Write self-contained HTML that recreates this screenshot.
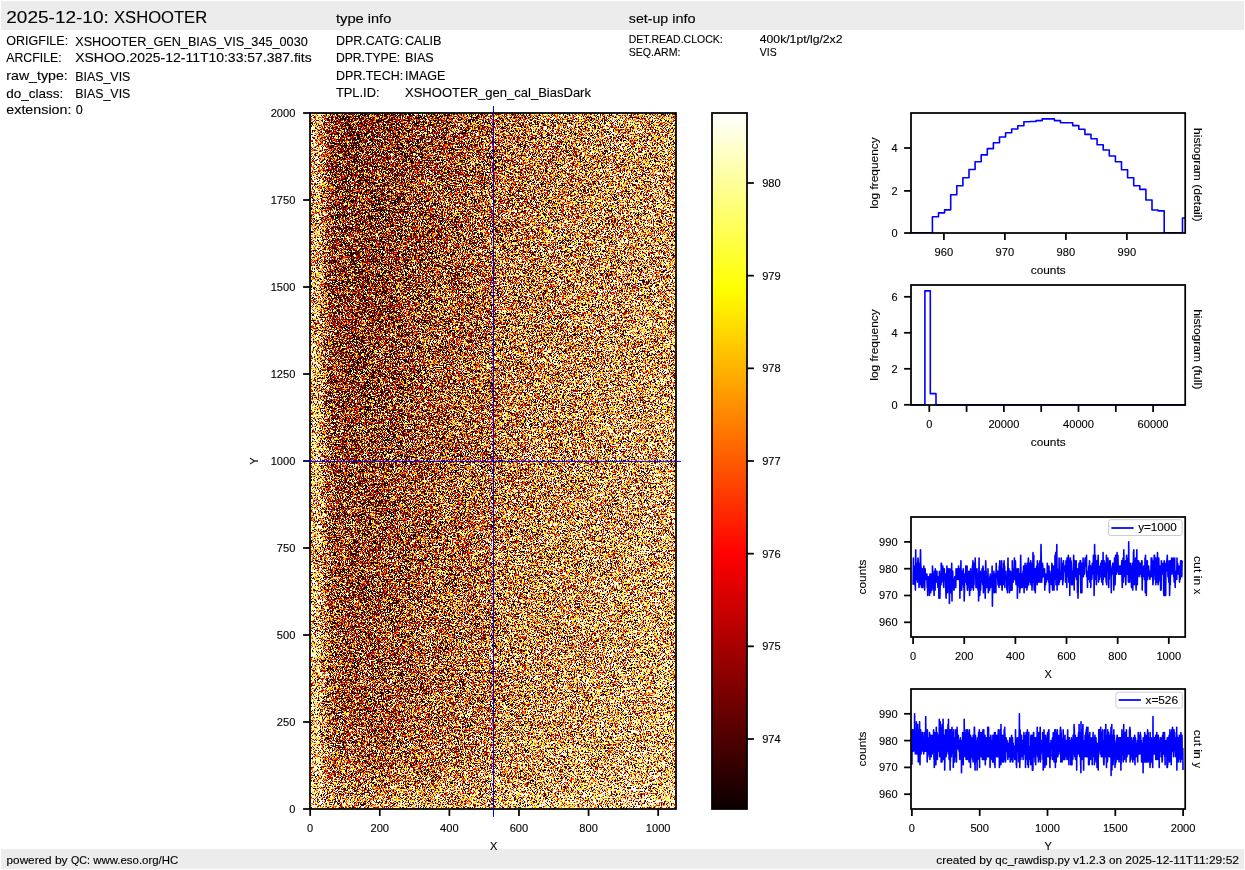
<!DOCTYPE html>
<html><head><meta charset="utf-8"><title>qc_rawdisp</title>
<style>html,body{margin:0;padding:0;background:#fff;overflow:hidden}svg{display:block;will-change:transform}text{font-family:"Liberation Sans",sans-serif;stroke:#000;stroke-width:0.12px}</style>
</head><body>
<svg width="1245" height="870" viewBox="0 0 1245 870">
<defs>
<filter id="noise" x="0" y="0" width="100%" height="100%" filterUnits="objectBoundingBox" color-interpolation-filters="sRGB">
<feTurbulence type="fractalNoise" baseFrequency="1.7" numOctaves="2" seed="7" result="t"/>
<feColorMatrix in="t" type="matrix" values="0 0 0 1 0  0 0 0 1 0  0 0 0 1 0  0 0 0 0 1" result="n"/>
<feComposite in="n" in2="SourceGraphic" operator="arithmetic" k1="0" k2="2.216" k3="0.5" k4="-0.822" result="v"/>
<feComponentTransfer in="v">
<feFuncR type="discrete" tableValues="0.0431 0.0431 0.0431 0.0431 0.2980 0.6471 1.0000 1.0000 1.0000 1.0000 1.0000 1.0000 1.0000 1.0000"/>
<feFuncG type="discrete" tableValues="0.0000 0.0000 0.0000 0.0000 0.0000 0.0000 0.0000 0.3608 0.7098 1.0000 1.0000 1.0000 1.0000 1.0000"/>
<feFuncB type="discrete" tableValues="0.0000 0.0000 0.0000 0.0000 0.0000 0.0000 0.0000 0.0000 0.0000 0.0902 0.6157 1.0000 1.0000 1.0000"/>
<feFuncA type="discrete" tableValues="1 1"/>
</feComponentTransfer>
</filter>
<linearGradient id="m0" x1="0" y1="0" x2="1" y2="0">
<stop offset="0.0000" stop-color="rgb(151,151,151)"/>
<stop offset="0.0055" stop-color="rgb(187,187,187)"/>
<stop offset="0.0246" stop-color="rgb(180,180,180)"/>
<stop offset="0.0355" stop-color="rgb(136,136,136)"/>
<stop offset="0.0519" stop-color="rgb(78,78,78)"/>
<stop offset="0.0683" stop-color="rgb(53,53,53)"/>
<stop offset="0.1093" stop-color="rgb(48,48,48)"/>
<stop offset="0.1230" stop-color="rgb(46,46,46)"/>
<stop offset="0.1776" stop-color="rgb(49,49,49)"/>
<stop offset="0.2186" stop-color="rgb(57,57,57)"/>
<stop offset="0.2596" stop-color="rgb(67,67,67)"/>
<stop offset="0.3005" stop-color="rgb(78,78,78)"/>
<stop offset="0.3552" stop-color="rgb(89,89,89)"/>
<stop offset="0.3825" stop-color="rgb(93,93,93)"/>
<stop offset="0.4235" stop-color="rgb(100,100,100)"/>
<stop offset="0.4973" stop-color="rgb(111,111,111)"/>
<stop offset="0.5082" stop-color="rgb(125,125,125)"/>
<stop offset="0.6011" stop-color="rgb(135,135,135)"/>
<stop offset="0.6831" stop-color="rgb(143,143,143)"/>
<stop offset="0.7650" stop-color="rgb(151,151,151)"/>
<stop offset="0.8470" stop-color="rgb(158,158,158)"/>
<stop offset="0.9290" stop-color="rgb(164,164,164)"/>
<stop offset="1.0000" stop-color="rgb(169,169,169)"/>
</linearGradient>
<linearGradient id="m1" x1="0" y1="0" x2="1" y2="0">
<stop offset="0.0000" stop-color="rgb(153,153,153)"/>
<stop offset="0.0055" stop-color="rgb(190,190,190)"/>
<stop offset="0.0246" stop-color="rgb(182,182,182)"/>
<stop offset="0.0355" stop-color="rgb(139,139,139)"/>
<stop offset="0.0519" stop-color="rgb(82,82,82)"/>
<stop offset="0.0683" stop-color="rgb(57,57,57)"/>
<stop offset="0.1093" stop-color="rgb(52,52,52)"/>
<stop offset="0.1230" stop-color="rgb(50,50,50)"/>
<stop offset="0.1776" stop-color="rgb(54,54,54)"/>
<stop offset="0.2186" stop-color="rgb(61,61,61)"/>
<stop offset="0.2596" stop-color="rgb(71,71,71)"/>
<stop offset="0.3005" stop-color="rgb(82,82,82)"/>
<stop offset="0.3552" stop-color="rgb(92,92,92)"/>
<stop offset="0.3825" stop-color="rgb(96,96,96)"/>
<stop offset="0.4235" stop-color="rgb(103,103,103)"/>
<stop offset="0.4973" stop-color="rgb(113,113,113)"/>
<stop offset="0.5082" stop-color="rgb(128,128,128)"/>
<stop offset="0.6011" stop-color="rgb(137,137,137)"/>
<stop offset="0.6831" stop-color="rgb(146,146,146)"/>
<stop offset="0.7650" stop-color="rgb(153,153,153)"/>
<stop offset="0.8470" stop-color="rgb(160,160,160)"/>
<stop offset="0.9290" stop-color="rgb(166,166,166)"/>
<stop offset="1.0000" stop-color="rgb(171,171,171)"/>
</linearGradient>
<linearGradient id="m2" x1="0" y1="0" x2="1" y2="0">
<stop offset="0.0000" stop-color="rgb(156,156,156)"/>
<stop offset="0.0055" stop-color="rgb(192,192,192)"/>
<stop offset="0.0246" stop-color="rgb(185,185,185)"/>
<stop offset="0.0355" stop-color="rgb(141,141,141)"/>
<stop offset="0.0519" stop-color="rgb(85,85,85)"/>
<stop offset="0.0683" stop-color="rgb(61,61,61)"/>
<stop offset="0.1093" stop-color="rgb(56,56,56)"/>
<stop offset="0.1230" stop-color="rgb(54,54,54)"/>
<stop offset="0.1776" stop-color="rgb(58,58,58)"/>
<stop offset="0.2186" stop-color="rgb(65,65,65)"/>
<stop offset="0.2596" stop-color="rgb(75,75,75)"/>
<stop offset="0.3005" stop-color="rgb(85,85,85)"/>
<stop offset="0.3552" stop-color="rgb(95,95,95)"/>
<stop offset="0.3825" stop-color="rgb(99,99,99)"/>
<stop offset="0.4235" stop-color="rgb(106,106,106)"/>
<stop offset="0.4973" stop-color="rgb(116,116,116)"/>
<stop offset="0.5082" stop-color="rgb(130,130,130)"/>
<stop offset="0.6011" stop-color="rgb(140,140,140)"/>
<stop offset="0.6831" stop-color="rgb(148,148,148)"/>
<stop offset="0.7650" stop-color="rgb(156,156,156)"/>
<stop offset="0.8470" stop-color="rgb(163,163,163)"/>
<stop offset="0.9290" stop-color="rgb(169,169,169)"/>
<stop offset="1.0000" stop-color="rgb(174,174,174)"/>
</linearGradient>
<linearGradient id="m3" x1="0" y1="0" x2="1" y2="0">
<stop offset="0.0000" stop-color="rgb(158,158,158)"/>
<stop offset="0.0055" stop-color="rgb(195,195,195)"/>
<stop offset="0.0246" stop-color="rgb(187,187,187)"/>
<stop offset="0.0355" stop-color="rgb(144,144,144)"/>
<stop offset="0.0519" stop-color="rgb(89,89,89)"/>
<stop offset="0.0683" stop-color="rgb(65,65,65)"/>
<stop offset="0.1093" stop-color="rgb(60,60,60)"/>
<stop offset="0.1230" stop-color="rgb(59,59,59)"/>
<stop offset="0.1776" stop-color="rgb(62,62,62)"/>
<stop offset="0.2186" stop-color="rgb(69,69,69)"/>
<stop offset="0.2596" stop-color="rgb(79,79,79)"/>
<stop offset="0.3005" stop-color="rgb(89,89,89)"/>
<stop offset="0.3552" stop-color="rgb(98,98,98)"/>
<stop offset="0.3825" stop-color="rgb(102,102,102)"/>
<stop offset="0.4235" stop-color="rgb(108,108,108)"/>
<stop offset="0.4973" stop-color="rgb(118,118,118)"/>
<stop offset="0.5082" stop-color="rgb(133,133,133)"/>
<stop offset="0.6011" stop-color="rgb(142,142,142)"/>
<stop offset="0.6831" stop-color="rgb(151,151,151)"/>
<stop offset="0.7650" stop-color="rgb(158,158,158)"/>
<stop offset="0.8470" stop-color="rgb(165,165,165)"/>
<stop offset="0.9290" stop-color="rgb(171,171,171)"/>
<stop offset="1.0000" stop-color="rgb(176,176,176)"/>
</linearGradient>
<linearGradient id="m4" x1="0" y1="0" x2="1" y2="0">
<stop offset="0.0000" stop-color="rgb(161,161,161)"/>
<stop offset="0.0055" stop-color="rgb(197,197,197)"/>
<stop offset="0.0246" stop-color="rgb(190,190,190)"/>
<stop offset="0.0355" stop-color="rgb(146,146,146)"/>
<stop offset="0.0519" stop-color="rgb(92,92,92)"/>
<stop offset="0.0683" stop-color="rgb(69,69,69)"/>
<stop offset="0.1093" stop-color="rgb(65,65,65)"/>
<stop offset="0.1230" stop-color="rgb(63,63,63)"/>
<stop offset="0.1776" stop-color="rgb(66,66,66)"/>
<stop offset="0.2186" stop-color="rgb(73,73,73)"/>
<stop offset="0.2596" stop-color="rgb(82,82,82)"/>
<stop offset="0.3005" stop-color="rgb(92,92,92)"/>
<stop offset="0.3552" stop-color="rgb(102,102,102)"/>
<stop offset="0.3825" stop-color="rgb(105,105,105)"/>
<stop offset="0.4235" stop-color="rgb(111,111,111)"/>
<stop offset="0.4973" stop-color="rgb(121,121,121)"/>
<stop offset="0.5082" stop-color="rgb(135,135,135)"/>
<stop offset="0.6011" stop-color="rgb(145,145,145)"/>
<stop offset="0.6831" stop-color="rgb(153,153,153)"/>
<stop offset="0.7650" stop-color="rgb(161,161,161)"/>
<stop offset="0.8470" stop-color="rgb(168,168,168)"/>
<stop offset="0.9290" stop-color="rgb(174,174,174)"/>
<stop offset="1.0000" stop-color="rgb(179,179,179)"/>
</linearGradient>
<linearGradient id="m5" x1="0" y1="0" x2="1" y2="0">
<stop offset="0.0000" stop-color="rgb(163,163,163)"/>
<stop offset="0.0055" stop-color="rgb(200,200,200)"/>
<stop offset="0.0246" stop-color="rgb(192,192,192)"/>
<stop offset="0.0355" stop-color="rgb(149,149,149)"/>
<stop offset="0.0519" stop-color="rgb(95,95,95)"/>
<stop offset="0.0683" stop-color="rgb(74,74,74)"/>
<stop offset="0.1093" stop-color="rgb(69,69,69)"/>
<stop offset="0.1230" stop-color="rgb(67,67,67)"/>
<stop offset="0.1776" stop-color="rgb(70,70,70)"/>
<stop offset="0.2186" stop-color="rgb(77,77,77)"/>
<stop offset="0.2596" stop-color="rgb(86,86,86)"/>
<stop offset="0.3005" stop-color="rgb(95,95,95)"/>
<stop offset="0.3552" stop-color="rgb(105,105,105)"/>
<stop offset="0.3825" stop-color="rgb(109,109,109)"/>
<stop offset="0.4235" stop-color="rgb(114,114,114)"/>
<stop offset="0.4973" stop-color="rgb(124,124,124)"/>
<stop offset="0.5082" stop-color="rgb(138,138,138)"/>
<stop offset="0.6011" stop-color="rgb(147,147,147)"/>
<stop offset="0.6831" stop-color="rgb(156,156,156)"/>
<stop offset="0.7650" stop-color="rgb(163,163,163)"/>
<stop offset="0.8470" stop-color="rgb(170,170,170)"/>
<stop offset="0.9290" stop-color="rgb(176,176,176)"/>
<stop offset="1.0000" stop-color="rgb(181,181,181)"/>
</linearGradient>
<linearGradient id="m6" x1="0" y1="0" x2="1" y2="0">
<stop offset="0.0000" stop-color="rgb(166,166,166)"/>
<stop offset="0.0055" stop-color="rgb(202,202,202)"/>
<stop offset="0.0246" stop-color="rgb(195,195,195)"/>
<stop offset="0.0355" stop-color="rgb(151,151,151)"/>
<stop offset="0.0519" stop-color="rgb(99,99,99)"/>
<stop offset="0.0683" stop-color="rgb(78,78,78)"/>
<stop offset="0.1093" stop-color="rgb(73,73,73)"/>
<stop offset="0.1230" stop-color="rgb(72,72,72)"/>
<stop offset="0.1776" stop-color="rgb(75,75,75)"/>
<stop offset="0.2186" stop-color="rgb(81,81,81)"/>
<stop offset="0.2596" stop-color="rgb(90,90,90)"/>
<stop offset="0.3005" stop-color="rgb(99,99,99)"/>
<stop offset="0.3552" stop-color="rgb(108,108,108)"/>
<stop offset="0.3825" stop-color="rgb(112,112,112)"/>
<stop offset="0.4235" stop-color="rgb(117,117,117)"/>
<stop offset="0.4973" stop-color="rgb(126,126,126)"/>
<stop offset="0.5082" stop-color="rgb(140,140,140)"/>
<stop offset="0.6011" stop-color="rgb(150,150,150)"/>
<stop offset="0.6831" stop-color="rgb(158,158,158)"/>
<stop offset="0.7650" stop-color="rgb(166,166,166)"/>
<stop offset="0.8470" stop-color="rgb(173,173,173)"/>
<stop offset="0.9290" stop-color="rgb(179,179,179)"/>
<stop offset="1.0000" stop-color="rgb(184,184,184)"/>
</linearGradient>
<linearGradient id="m7" x1="0" y1="0" x2="1" y2="0">
<stop offset="0.0000" stop-color="rgb(168,168,168)"/>
<stop offset="0.0055" stop-color="rgb(205,205,205)"/>
<stop offset="0.0246" stop-color="rgb(197,197,197)"/>
<stop offset="0.0355" stop-color="rgb(154,154,154)"/>
<stop offset="0.0519" stop-color="rgb(103,103,103)"/>
<stop offset="0.0683" stop-color="rgb(82,82,82)"/>
<stop offset="0.1093" stop-color="rgb(78,78,78)"/>
<stop offset="0.1230" stop-color="rgb(76,76,76)"/>
<stop offset="0.1776" stop-color="rgb(79,79,79)"/>
<stop offset="0.2186" stop-color="rgb(85,85,85)"/>
<stop offset="0.2596" stop-color="rgb(94,94,94)"/>
<stop offset="0.3005" stop-color="rgb(103,103,103)"/>
<stop offset="0.3552" stop-color="rgb(111,111,111)"/>
<stop offset="0.3825" stop-color="rgb(115,115,115)"/>
<stop offset="0.4235" stop-color="rgb(120,120,120)"/>
<stop offset="0.4973" stop-color="rgb(129,129,129)"/>
<stop offset="0.5082" stop-color="rgb(143,143,143)"/>
<stop offset="0.6011" stop-color="rgb(152,152,152)"/>
<stop offset="0.6831" stop-color="rgb(161,161,161)"/>
<stop offset="0.7650" stop-color="rgb(168,168,168)"/>
<stop offset="0.8470" stop-color="rgb(176,176,176)"/>
<stop offset="0.9290" stop-color="rgb(181,181,181)"/>
<stop offset="1.0000" stop-color="rgb(187,187,187)"/>
</linearGradient>
<linearGradient id="m8" x1="0" y1="0" x2="1" y2="0">
<stop offset="0.0000" stop-color="rgb(171,171,171)"/>
<stop offset="0.0055" stop-color="rgb(207,207,207)"/>
<stop offset="0.0246" stop-color="rgb(200,200,200)"/>
<stop offset="0.0355" stop-color="rgb(156,156,156)"/>
<stop offset="0.0519" stop-color="rgb(106,106,106)"/>
<stop offset="0.0683" stop-color="rgb(86,86,86)"/>
<stop offset="0.1093" stop-color="rgb(82,82,82)"/>
<stop offset="0.1230" stop-color="rgb(80,80,80)"/>
<stop offset="0.1776" stop-color="rgb(83,83,83)"/>
<stop offset="0.2186" stop-color="rgb(89,89,89)"/>
<stop offset="0.2596" stop-color="rgb(98,98,98)"/>
<stop offset="0.3005" stop-color="rgb(106,106,106)"/>
<stop offset="0.3552" stop-color="rgb(115,115,115)"/>
<stop offset="0.3825" stop-color="rgb(118,118,118)"/>
<stop offset="0.4235" stop-color="rgb(123,123,123)"/>
<stop offset="0.4973" stop-color="rgb(132,132,132)"/>
<stop offset="0.5082" stop-color="rgb(145,145,145)"/>
<stop offset="0.6011" stop-color="rgb(155,155,155)"/>
<stop offset="0.6831" stop-color="rgb(164,164,164)"/>
<stop offset="0.7650" stop-color="rgb(171,171,171)"/>
<stop offset="0.8470" stop-color="rgb(178,178,178)"/>
<stop offset="0.9290" stop-color="rgb(184,184,184)"/>
<stop offset="1.0000" stop-color="rgb(189,189,189)"/>
</linearGradient>
<linearGradient id="m9" x1="0" y1="0" x2="1" y2="0">
<stop offset="0.0000" stop-color="rgb(173,173,173)"/>
<stop offset="0.0055" stop-color="rgb(210,210,210)"/>
<stop offset="0.0246" stop-color="rgb(202,202,202)"/>
<stop offset="0.0355" stop-color="rgb(159,159,159)"/>
<stop offset="0.0519" stop-color="rgb(109,109,109)"/>
<stop offset="0.0683" stop-color="rgb(90,90,90)"/>
<stop offset="0.1093" stop-color="rgb(86,86,86)"/>
<stop offset="0.1230" stop-color="rgb(85,85,85)"/>
<stop offset="0.1776" stop-color="rgb(87,87,87)"/>
<stop offset="0.2186" stop-color="rgb(93,93,93)"/>
<stop offset="0.2596" stop-color="rgb(101,101,101)"/>
<stop offset="0.3005" stop-color="rgb(109,109,109)"/>
<stop offset="0.3552" stop-color="rgb(118,118,118)"/>
<stop offset="0.3825" stop-color="rgb(121,121,121)"/>
<stop offset="0.4235" stop-color="rgb(126,126,126)"/>
<stop offset="0.4973" stop-color="rgb(134,134,134)"/>
<stop offset="0.5082" stop-color="rgb(148,148,148)"/>
<stop offset="0.6011" stop-color="rgb(158,158,158)"/>
<stop offset="0.6831" stop-color="rgb(166,166,166)"/>
<stop offset="0.7650" stop-color="rgb(173,173,173)"/>
<stop offset="0.8470" stop-color="rgb(181,181,181)"/>
<stop offset="0.9290" stop-color="rgb(186,186,186)"/>
<stop offset="1.0000" stop-color="rgb(192,192,192)"/>
</linearGradient>
<linearGradient id="m10" x1="0" y1="0" x2="1" y2="0">
<stop offset="0.0000" stop-color="rgb(177,177,177)"/>
<stop offset="0.0055" stop-color="rgb(214,214,214)"/>
<stop offset="0.0246" stop-color="rgb(206,206,206)"/>
<stop offset="0.0355" stop-color="rgb(163,163,163)"/>
<stop offset="0.0519" stop-color="rgb(114,114,114)"/>
<stop offset="0.0683" stop-color="rgb(95,95,95)"/>
<stop offset="0.1093" stop-color="rgb(91,91,91)"/>
<stop offset="0.1230" stop-color="rgb(90,90,90)"/>
<stop offset="0.1776" stop-color="rgb(93,93,93)"/>
<stop offset="0.2186" stop-color="rgb(98,98,98)"/>
<stop offset="0.2596" stop-color="rgb(106,106,106)"/>
<stop offset="0.3005" stop-color="rgb(114,114,114)"/>
<stop offset="0.3552" stop-color="rgb(122,122,122)"/>
<stop offset="0.3825" stop-color="rgb(125,125,125)"/>
<stop offset="0.4235" stop-color="rgb(130,130,130)"/>
<stop offset="0.4973" stop-color="rgb(138,138,138)"/>
<stop offset="0.5082" stop-color="rgb(152,152,152)"/>
<stop offset="0.6011" stop-color="rgb(161,161,161)"/>
<stop offset="0.6831" stop-color="rgb(170,170,170)"/>
<stop offset="0.7650" stop-color="rgb(177,177,177)"/>
<stop offset="0.8470" stop-color="rgb(185,185,185)"/>
<stop offset="0.9290" stop-color="rgb(190,190,190)"/>
<stop offset="1.0000" stop-color="rgb(195,195,195)"/>
</linearGradient>
<linearGradient id="m11" x1="0" y1="0" x2="1" y2="0">
<stop offset="0.0000" stop-color="rgb(185,185,185)"/>
<stop offset="0.0055" stop-color="rgb(222,222,222)"/>
<stop offset="0.0246" stop-color="rgb(214,214,214)"/>
<stop offset="0.0355" stop-color="rgb(171,171,171)"/>
<stop offset="0.0519" stop-color="rgb(123,123,123)"/>
<stop offset="0.0683" stop-color="rgb(106,106,106)"/>
<stop offset="0.1093" stop-color="rgb(102,102,102)"/>
<stop offset="0.1230" stop-color="rgb(101,101,101)"/>
<stop offset="0.1776" stop-color="rgb(103,103,103)"/>
<stop offset="0.2186" stop-color="rgb(108,108,108)"/>
<stop offset="0.2596" stop-color="rgb(116,116,116)"/>
<stop offset="0.3005" stop-color="rgb(123,123,123)"/>
<stop offset="0.3552" stop-color="rgb(131,131,131)"/>
<stop offset="0.3825" stop-color="rgb(134,134,134)"/>
<stop offset="0.4235" stop-color="rgb(139,139,139)"/>
<stop offset="0.4973" stop-color="rgb(146,146,146)"/>
<stop offset="0.5082" stop-color="rgb(160,160,160)"/>
<stop offset="0.6011" stop-color="rgb(169,169,169)"/>
<stop offset="0.6831" stop-color="rgb(178,178,178)"/>
<stop offset="0.7650" stop-color="rgb(185,185,185)"/>
<stop offset="0.8470" stop-color="rgb(192,192,192)"/>
<stop offset="0.9290" stop-color="rgb(198,198,198)"/>
<stop offset="1.0000" stop-color="rgb(203,203,203)"/>
</linearGradient>
<linearGradient id="m12" x1="0" y1="0" x2="1" y2="0">
<stop offset="0.0000" stop-color="rgb(191,191,191)"/>
<stop offset="0.0055" stop-color="rgb(228,228,228)"/>
<stop offset="0.0246" stop-color="rgb(220,220,220)"/>
<stop offset="0.0355" stop-color="rgb(177,177,177)"/>
<stop offset="0.0519" stop-color="rgb(138,138,138)"/>
<stop offset="0.0683" stop-color="rgb(127,127,127)"/>
<stop offset="0.1093" stop-color="rgb(124,124,124)"/>
<stop offset="0.1230" stop-color="rgb(123,123,123)"/>
<stop offset="0.1776" stop-color="rgb(125,125,125)"/>
<stop offset="0.2186" stop-color="rgb(128,128,128)"/>
<stop offset="0.2596" stop-color="rgb(133,133,133)"/>
<stop offset="0.3005" stop-color="rgb(138,138,138)"/>
<stop offset="0.3552" stop-color="rgb(143,143,143)"/>
<stop offset="0.3825" stop-color="rgb(145,145,145)"/>
<stop offset="0.4235" stop-color="rgb(148,148,148)"/>
<stop offset="0.4973" stop-color="rgb(153,153,153)"/>
<stop offset="0.5082" stop-color="rgb(166,166,166)"/>
<stop offset="0.6011" stop-color="rgb(175,175,175)"/>
<stop offset="0.6831" stop-color="rgb(184,184,184)"/>
<stop offset="0.7650" stop-color="rgb(191,191,191)"/>
<stop offset="0.8470" stop-color="rgb(199,199,199)"/>
<stop offset="0.9290" stop-color="rgb(204,204,204)"/>
<stop offset="1.0000" stop-color="rgb(209,209,209)"/>
</linearGradient>
<linearGradient id="m13" x1="0" y1="0" x2="1" y2="0">
<stop offset="0.0000" stop-color="rgb(201,201,201)"/>
<stop offset="0.0055" stop-color="rgb(238,238,238)"/>
<stop offset="0.0246" stop-color="rgb(230,230,230)"/>
<stop offset="0.0355" stop-color="rgb(187,187,187)"/>
<stop offset="0.0519" stop-color="rgb(154,154,154)"/>
<stop offset="0.0683" stop-color="rgb(146,146,146)"/>
<stop offset="0.1093" stop-color="rgb(145,145,145)"/>
<stop offset="0.1230" stop-color="rgb(144,144,144)"/>
<stop offset="0.1776" stop-color="rgb(145,145,145)"/>
<stop offset="0.2186" stop-color="rgb(147,147,147)"/>
<stop offset="0.2596" stop-color="rgb(151,151,151)"/>
<stop offset="0.3005" stop-color="rgb(154,154,154)"/>
<stop offset="0.3552" stop-color="rgb(157,157,157)"/>
<stop offset="0.3825" stop-color="rgb(158,158,158)"/>
<stop offset="0.4235" stop-color="rgb(160,160,160)"/>
<stop offset="0.4973" stop-color="rgb(164,164,164)"/>
<stop offset="0.5082" stop-color="rgb(176,176,176)"/>
<stop offset="0.6011" stop-color="rgb(185,185,185)"/>
<stop offset="0.6831" stop-color="rgb(194,194,194)"/>
<stop offset="0.7650" stop-color="rgb(201,201,201)"/>
<stop offset="0.8470" stop-color="rgb(208,208,208)"/>
<stop offset="0.9290" stop-color="rgb(214,214,214)"/>
<stop offset="1.0000" stop-color="rgb(219,219,219)"/>
</linearGradient>
<linearGradient id="m14" x1="0" y1="0" x2="1" y2="0">
<stop offset="0.0000" stop-color="rgb(212,212,212)"/>
<stop offset="0.0055" stop-color="rgb(249,249,249)"/>
<stop offset="0.0246" stop-color="rgb(241,241,241)"/>
<stop offset="0.0355" stop-color="rgb(198,198,198)"/>
<stop offset="0.0519" stop-color="rgb(169,169,169)"/>
<stop offset="0.0683" stop-color="rgb(164,164,164)"/>
<stop offset="0.1093" stop-color="rgb(163,163,163)"/>
<stop offset="0.1230" stop-color="rgb(163,163,163)"/>
<stop offset="0.1776" stop-color="rgb(164,164,164)"/>
<stop offset="0.2186" stop-color="rgb(165,165,165)"/>
<stop offset="0.2596" stop-color="rgb(167,167,167)"/>
<stop offset="0.3005" stop-color="rgb(169,169,169)"/>
<stop offset="0.3552" stop-color="rgb(171,171,171)"/>
<stop offset="0.3825" stop-color="rgb(172,172,172)"/>
<stop offset="0.4235" stop-color="rgb(173,173,173)"/>
<stop offset="0.4973" stop-color="rgb(175,175,175)"/>
<stop offset="0.5082" stop-color="rgb(187,187,187)"/>
<stop offset="0.6011" stop-color="rgb(196,196,196)"/>
<stop offset="0.6831" stop-color="rgb(205,205,205)"/>
<stop offset="0.7650" stop-color="rgb(212,212,212)"/>
<stop offset="0.8470" stop-color="rgb(219,219,219)"/>
<stop offset="0.9290" stop-color="rgb(225,225,225)"/>
<stop offset="1.0000" stop-color="rgb(230,230,230)"/>
</linearGradient>
<linearGradient id="m15" x1="0" y1="0" x2="1" y2="0">
<stop offset="0.0000" stop-color="rgb(222,222,222)"/>
<stop offset="0.0055" stop-color="rgb(255,255,255)"/>
<stop offset="0.0246" stop-color="rgb(251,251,251)"/>
<stop offset="0.0355" stop-color="rgb(207,207,207)"/>
<stop offset="0.0519" stop-color="rgb(182,182,182)"/>
<stop offset="0.0683" stop-color="rgb(179,179,179)"/>
<stop offset="0.1093" stop-color="rgb(178,178,178)"/>
<stop offset="0.1230" stop-color="rgb(178,178,178)"/>
<stop offset="0.1776" stop-color="rgb(179,179,179)"/>
<stop offset="0.2186" stop-color="rgb(179,179,179)"/>
<stop offset="0.2596" stop-color="rgb(180,180,180)"/>
<stop offset="0.3005" stop-color="rgb(182,182,182)"/>
<stop offset="0.3552" stop-color="rgb(183,183,183)"/>
<stop offset="0.3825" stop-color="rgb(183,183,183)"/>
<stop offset="0.4235" stop-color="rgb(184,184,184)"/>
<stop offset="0.4973" stop-color="rgb(185,185,185)"/>
<stop offset="0.5082" stop-color="rgb(196,196,196)"/>
<stop offset="0.6011" stop-color="rgb(206,206,206)"/>
<stop offset="0.6831" stop-color="rgb(214,214,214)"/>
<stop offset="0.7650" stop-color="rgb(222,222,222)"/>
<stop offset="0.8470" stop-color="rgb(229,229,229)"/>
<stop offset="0.9290" stop-color="rgb(235,235,235)"/>
<stop offset="1.0000" stop-color="rgb(240,240,240)"/>
</linearGradient>
<linearGradient id="cb" x1="0" y1="1" x2="0" y2="0">
<stop offset="0.0" stop-color="#0b0000"/>
<stop offset="0.365079" stop-color="#ff0000"/>
<stop offset="0.746032" stop-color="#ffff00"/>
<stop offset="1.0" stop-color="#ffffff"/>
</linearGradient>
</defs>
<rect x="1" y="1" width="1243" height="29" fill="#ececec"/>
<rect x="1" y="849" width="1243" height="20" fill="#ececec"/>
<text x="6.30" y="22.90" font-size="16.76" textLength="102.47" lengthAdjust="spacingAndGlyphs" fill="#000">2025-12-10:</text>
<text x="114.07" y="22.90" font-size="16.76" textLength="93.06" lengthAdjust="spacingAndGlyphs" fill="#000">XSHOOTER</text>
<text x="335.90" y="22.90" font-size="12.57" textLength="27.92" lengthAdjust="spacingAndGlyphs" fill="#000">type</text>
<text x="367.80" y="22.90" font-size="12.57" textLength="23.44" lengthAdjust="spacingAndGlyphs" fill="#000">info</text>
<text x="628.80" y="22.90" font-size="12.57" textLength="39.47" lengthAdjust="spacingAndGlyphs" fill="#000">set-up</text>
<text x="672.25" y="22.90" font-size="12.57" textLength="23.44" lengthAdjust="spacingAndGlyphs" fill="#000">info</text>
<text x="6.30" y="44.90" font-size="12.57" textLength="61.85" lengthAdjust="spacingAndGlyphs" fill="#000">ORIGFILE:</text>
<text x="75.20" y="45.70" font-size="12.57" textLength="232.57" lengthAdjust="spacingAndGlyphs" fill="#000">XSHOOTER_GEN_BIAS_VIS_345_0030</text>
<text x="6.30" y="61.70" font-size="12.57" textLength="55.29" lengthAdjust="spacingAndGlyphs" fill="#000">ARCFILE:</text>
<text x="75.20" y="61.70" font-size="12.57" textLength="236.56" lengthAdjust="spacingAndGlyphs" fill="#000">XSHOO.2025-12-11T10:33:57.387.fits</text>
<text x="6.30" y="80.10" font-size="12.57" textLength="61.41" lengthAdjust="spacingAndGlyphs" fill="#000">raw_type:</text>
<text x="75.20" y="80.60" font-size="12.57" textLength="55.17" lengthAdjust="spacingAndGlyphs" fill="#000">BIAS_VIS</text>
<text x="6.30" y="97.50" font-size="12.57" textLength="57.07" lengthAdjust="spacingAndGlyphs" fill="#000">do_class:</text>
<text x="75.20" y="97.60" font-size="12.57" textLength="55.17" lengthAdjust="spacingAndGlyphs" fill="#000">BIAS_VIS</text>
<text x="6.30" y="114.20" font-size="12.57" textLength="65.15" lengthAdjust="spacingAndGlyphs" fill="#000">extension:</text>
<text x="79.18" y="114.20" font-size="12.57" text-anchor="middle" fill="#000">0</text>
<text x="335.90" y="45.00" font-size="12.57" textLength="67.22" lengthAdjust="spacingAndGlyphs" fill="#000">DPR.CATG:</text>
<text x="405.00" y="45.00" font-size="12.57" textLength="36.51" lengthAdjust="spacingAndGlyphs" fill="#000">CALIB</text>
<text x="335.90" y="62.10" font-size="12.57" textLength="64.29" lengthAdjust="spacingAndGlyphs" fill="#000">DPR.TYPE:</text>
<text x="405.00" y="62.10" font-size="12.57" textLength="28.75" lengthAdjust="spacingAndGlyphs" fill="#000">BIAS</text>
<text x="335.90" y="80.00" font-size="12.57" textLength="67.25" lengthAdjust="spacingAndGlyphs" fill="#000">DPR.TECH:</text>
<text x="405.00" y="80.00" font-size="12.57" textLength="40.39" lengthAdjust="spacingAndGlyphs" fill="#000">IMAGE</text>
<text x="335.90" y="97.10" font-size="12.57" textLength="43.63" lengthAdjust="spacingAndGlyphs" fill="#000">TPL.ID:</text>
<text x="405.00" y="97.10" font-size="12.57" textLength="185.98" lengthAdjust="spacingAndGlyphs" fill="#000">XSHOOTER_gen_cal_BiasDark</text>
<text x="628.80" y="42.80" font-size="11.00" textLength="93.84" lengthAdjust="spacingAndGlyphs" fill="#000">DET.READ.CLOCK:</text>
<text x="759.80" y="42.80" font-size="11.00" textLength="82.69" lengthAdjust="spacingAndGlyphs" fill="#000">400k/1pt/lg/2x2</text>
<text x="628.80" y="55.60" font-size="11.00" textLength="51.56" lengthAdjust="spacingAndGlyphs" fill="#000">SEQ.ARM:</text>
<text x="759.80" y="55.60" font-size="11.00" textLength="16.81" lengthAdjust="spacingAndGlyphs" fill="#000">VIS</text>
<text x="6.60" y="863.80" font-size="11.00" textLength="44.99" lengthAdjust="spacingAndGlyphs" fill="#000">powered</text>
<text x="54.90" y="863.80" font-size="11.00" textLength="12.78" lengthAdjust="spacingAndGlyphs" fill="#000">by</text>
<text x="70.99" y="863.80" font-size="11.00" textLength="18.98" lengthAdjust="spacingAndGlyphs" fill="#000">QC:</text>
<text x="93.28" y="863.80" font-size="11.00" textLength="84.95" lengthAdjust="spacingAndGlyphs" fill="#000">www.eso.org/HC</text>
<text x="936.29" y="863.80" font-size="11.00" textLength="39.68" lengthAdjust="spacingAndGlyphs" fill="#000">created</text>
<text x="979.28" y="863.80" font-size="11.00" textLength="12.78" lengthAdjust="spacingAndGlyphs" fill="#000">by</text>
<text x="995.37" y="863.80" font-size="11.00" textLength="74.37" lengthAdjust="spacingAndGlyphs" fill="#000">qc_rawdisp.py</text>
<text x="1073.05" y="863.80" font-size="11.00" textLength="32.67" lengthAdjust="spacingAndGlyphs" fill="#000">v1.2.3</text>
<text x="1109.03" y="863.80" font-size="11.00" textLength="12.98" lengthAdjust="spacingAndGlyphs" fill="#000">on</text>
<text x="1125.32" y="863.80" font-size="11.00" textLength="113.68" lengthAdjust="spacingAndGlyphs" fill="#000">2025-12-11T11:29:52</text>
<g filter="url(#noise)">
<rect x="310" y="113" width="366" height="60" fill="url(#m0)"/>
<rect x="310" y="173" width="366" height="60" fill="url(#m1)"/>
<rect x="310" y="233" width="366" height="60" fill="url(#m2)"/>
<rect x="310" y="293" width="366" height="60" fill="url(#m3)"/>
<rect x="310" y="353" width="366" height="60" fill="url(#m4)"/>
<rect x="310" y="413" width="366" height="60" fill="url(#m5)"/>
<rect x="310" y="473" width="366" height="60" fill="url(#m6)"/>
<rect x="310" y="533" width="366" height="60" fill="url(#m7)"/>
<rect x="310" y="593" width="366" height="60" fill="url(#m8)"/>
<rect x="310" y="653" width="366" height="50" fill="url(#m9)"/>
<rect x="310" y="703" width="366" height="40" fill="url(#m10)"/>
<rect x="310" y="743" width="366" height="25" fill="url(#m11)"/>
<rect x="310" y="768" width="366" height="15" fill="url(#m12)"/>
<rect x="310" y="783" width="366" height="12" fill="url(#m13)"/>
<rect x="310" y="795" width="366" height="8" fill="url(#m14)"/>
<rect x="310" y="803" width="366" height="6" fill="url(#m15)"/>
</g>
<rect x="310.00" y="113.00" width="366.00" height="696.00" fill="none" stroke="#000" stroke-width="1.75"/>
<line x1="310.17" y1="809.00" x2="310.17" y2="815.90" stroke="#000" stroke-width="1.75"/>
<text x="310.17" y="831.80" font-size="11.00" text-anchor="middle" fill="#000">0</text>
<line x1="379.77" y1="809.00" x2="379.77" y2="815.90" stroke="#000" stroke-width="1.75"/>
<text x="370.49" y="831.80" font-size="11.00" textLength="18.56" lengthAdjust="spacingAndGlyphs" fill="#000">200</text>
<line x1="449.37" y1="809.00" x2="449.37" y2="815.90" stroke="#000" stroke-width="1.75"/>
<text x="440.09" y="831.80" font-size="11.00" textLength="18.56" lengthAdjust="spacingAndGlyphs" fill="#000">400</text>
<line x1="518.97" y1="809.00" x2="518.97" y2="815.90" stroke="#000" stroke-width="1.75"/>
<text x="509.69" y="831.80" font-size="11.00" textLength="18.56" lengthAdjust="spacingAndGlyphs" fill="#000">600</text>
<line x1="588.57" y1="809.00" x2="588.57" y2="815.90" stroke="#000" stroke-width="1.75"/>
<text x="579.29" y="831.80" font-size="11.00" textLength="18.56" lengthAdjust="spacingAndGlyphs" fill="#000">800</text>
<line x1="658.17" y1="809.00" x2="658.17" y2="815.90" stroke="#000" stroke-width="1.75"/>
<text x="645.80" y="831.80" font-size="11.00" textLength="24.74" lengthAdjust="spacingAndGlyphs" fill="#000">1000</text>
<line x1="303.10" y1="809.00" x2="310.00" y2="809.00" stroke="#000" stroke-width="1.75"/>
<text x="292.31" y="813.00" font-size="11.00" text-anchor="middle" fill="#000">0</text>
<line x1="303.10" y1="722.00" x2="310.00" y2="722.00" stroke="#000" stroke-width="1.75"/>
<text x="276.84" y="726.00" font-size="11.00" textLength="18.56" lengthAdjust="spacingAndGlyphs" fill="#000">250</text>
<line x1="303.10" y1="635.00" x2="310.00" y2="635.00" stroke="#000" stroke-width="1.75"/>
<text x="276.84" y="639.00" font-size="11.00" textLength="18.56" lengthAdjust="spacingAndGlyphs" fill="#000">500</text>
<line x1="303.10" y1="548.00" x2="310.00" y2="548.00" stroke="#000" stroke-width="1.75"/>
<text x="276.84" y="552.00" font-size="11.00" textLength="18.56" lengthAdjust="spacingAndGlyphs" fill="#000">750</text>
<line x1="303.10" y1="461.00" x2="310.00" y2="461.00" stroke="#000" stroke-width="1.75"/>
<text x="270.66" y="465.00" font-size="11.00" textLength="24.74" lengthAdjust="spacingAndGlyphs" fill="#000">1000</text>
<line x1="303.10" y1="374.00" x2="310.00" y2="374.00" stroke="#000" stroke-width="1.75"/>
<text x="270.66" y="378.00" font-size="11.00" textLength="24.74" lengthAdjust="spacingAndGlyphs" fill="#000">1250</text>
<line x1="303.10" y1="287.00" x2="310.00" y2="287.00" stroke="#000" stroke-width="1.75"/>
<text x="270.66" y="291.00" font-size="11.00" textLength="24.74" lengthAdjust="spacingAndGlyphs" fill="#000">1500</text>
<line x1="303.10" y1="200.00" x2="310.00" y2="200.00" stroke="#000" stroke-width="1.75"/>
<text x="270.66" y="204.00" font-size="11.00" textLength="24.74" lengthAdjust="spacingAndGlyphs" fill="#000">1750</text>
<line x1="303.10" y1="113.00" x2="310.00" y2="113.00" stroke="#000" stroke-width="1.75"/>
<text x="270.66" y="117.00" font-size="11.00" textLength="24.74" lengthAdjust="spacingAndGlyphs" fill="#000">2000</text>
<text x="493.60" y="850.00" font-size="11.00" text-anchor="middle" fill="#000">X</text>
<g transform="translate(257.90,461.00) rotate(-90)">
<text x="0.00" y="0.00" font-size="11.00" text-anchor="middle" fill="#000">Y</text>
</g>
<line x1="493.50" y1="106.00" x2="493.50" y2="816.90" stroke="#0000ff" stroke-width="1.0"/>
<line x1="306.00" y1="461.40" x2="681.00" y2="461.40" stroke="#0000ff" stroke-width="1.0"/>
<rect x="712.0" y="113.0" width="35.00" height="696.00" fill="url(#cb)"/>
<rect x="712.00" y="113.00" width="35.00" height="696.00" fill="none" stroke="#000" stroke-width="1.75"/>
<line x1="747.00" y1="739.01" x2="753.90" y2="739.01" stroke="#000" stroke-width="1.75"/>
<text x="762.20" y="742.91" font-size="11.00" textLength="18.56" lengthAdjust="spacingAndGlyphs" fill="#000">974</text>
<line x1="747.00" y1="646.34" x2="753.90" y2="646.34" stroke="#000" stroke-width="1.75"/>
<text x="762.20" y="650.24" font-size="11.00" textLength="18.56" lengthAdjust="spacingAndGlyphs" fill="#000">975</text>
<line x1="747.00" y1="553.67" x2="753.90" y2="553.67" stroke="#000" stroke-width="1.75"/>
<text x="762.20" y="557.57" font-size="11.00" textLength="18.56" lengthAdjust="spacingAndGlyphs" fill="#000">976</text>
<line x1="747.00" y1="461.00" x2="753.90" y2="461.00" stroke="#000" stroke-width="1.75"/>
<text x="762.20" y="464.90" font-size="11.00" textLength="18.56" lengthAdjust="spacingAndGlyphs" fill="#000">977</text>
<line x1="747.00" y1="368.33" x2="753.90" y2="368.33" stroke="#000" stroke-width="1.75"/>
<text x="762.20" y="372.23" font-size="11.00" textLength="18.56" lengthAdjust="spacingAndGlyphs" fill="#000">978</text>
<line x1="747.00" y1="275.66" x2="753.90" y2="275.66" stroke="#000" stroke-width="1.75"/>
<text x="762.20" y="279.56" font-size="11.00" textLength="18.56" lengthAdjust="spacingAndGlyphs" fill="#000">979</text>
<line x1="747.00" y1="182.99" x2="753.90" y2="182.99" stroke="#000" stroke-width="1.75"/>
<text x="762.20" y="186.89" font-size="11.00" textLength="18.56" lengthAdjust="spacingAndGlyphs" fill="#000">980</text>
<clipPath id="c1"><rect x="911.0" y="113.0" width="274.20" height="120.00"/></clipPath>
<polyline clip-path="url(#c1)" fill="none" stroke="#0000ff" stroke-width="1.6" stroke-linejoin="round" points="912.00,232.90 914.10,232.90 914.10,232.90 920.20,232.90 920.20,232.90 926.30,232.90 926.30,232.90 932.40,232.90 932.40,216.74 938.50,216.74 938.50,212.86 944.60,212.86 944.60,209.84 950.70,209.84 950.70,194.76 956.80,194.76 956.80,185.71 962.90,185.71 962.90,177.73 969.00,177.73 969.00,169.54 975.10,169.54 975.10,161.79 981.20,161.79 981.20,154.89 987.30,154.89 987.30,148.64 993.40,148.64 993.40,142.82 999.50,142.82 999.50,137.00 1005.60,137.00 1005.60,132.69 1011.70,132.69 1011.70,129.03 1017.80,129.03 1017.80,125.80 1023.90,125.80 1023.90,121.70 1030.00,121.70 1030.00,121.49 1036.10,121.49 1036.10,120.62 1042.20,120.62 1042.20,118.90 1048.30,118.90 1048.30,118.90 1054.40,118.90 1054.40,120.62 1060.50,120.62 1060.50,122.78 1066.60,122.78 1066.60,122.78 1072.70,122.78 1072.70,125.58 1078.80,125.58 1078.80,129.24 1084.90,129.24 1084.90,134.42 1091.00,134.42 1091.00,138.73 1097.10,138.73 1097.10,144.76 1103.20,144.76 1103.20,149.93 1109.30,149.93 1109.30,155.97 1115.40,155.97 1115.40,161.79 1121.50,161.79 1121.50,169.76 1127.60,169.76 1127.60,177.73 1133.70,177.73 1133.70,185.71 1139.80,185.71 1139.80,189.37 1145.90,189.37 1145.90,199.93 1152.00,199.93 1152.00,210.06 1158.10,210.06 1158.10,210.92 1164.20,210.92 1164.20,232.90 1170.30,232.90 1170.30,232.90 1176.40,232.90 1176.40,232.90 1182.50,232.90 1182.50,218.03 1185.20,218.03"/>
<rect x="911.00" y="113.00" width="274.20" height="120.00" fill="none" stroke="#000" stroke-width="1.75"/>
<line x1="943.90" y1="233.00" x2="943.90" y2="239.90" stroke="#000" stroke-width="1.75"/>
<text x="934.62" y="256.00" font-size="11.00" textLength="18.56" lengthAdjust="spacingAndGlyphs" fill="#000">960</text>
<line x1="1004.90" y1="233.00" x2="1004.90" y2="239.90" stroke="#000" stroke-width="1.75"/>
<text x="995.62" y="256.00" font-size="11.00" textLength="18.56" lengthAdjust="spacingAndGlyphs" fill="#000">970</text>
<line x1="1065.90" y1="233.00" x2="1065.90" y2="239.90" stroke="#000" stroke-width="1.75"/>
<text x="1056.62" y="256.00" font-size="11.00" textLength="18.56" lengthAdjust="spacingAndGlyphs" fill="#000">980</text>
<line x1="1126.90" y1="233.00" x2="1126.90" y2="239.90" stroke="#000" stroke-width="1.75"/>
<text x="1117.62" y="256.00" font-size="11.00" textLength="18.56" lengthAdjust="spacingAndGlyphs" fill="#000">990</text>
<line x1="904.10" y1="233.00" x2="911.00" y2="233.00" stroke="#000" stroke-width="1.75"/>
<text x="894.51" y="236.90" font-size="11.00" text-anchor="middle" fill="#000">0</text>
<line x1="904.10" y1="190.90" x2="911.00" y2="190.90" stroke="#000" stroke-width="1.75"/>
<text x="894.51" y="194.80" font-size="11.00" text-anchor="middle" fill="#000">2</text>
<line x1="904.10" y1="148.00" x2="911.00" y2="148.00" stroke="#000" stroke-width="1.75"/>
<text x="894.51" y="151.90" font-size="11.00" text-anchor="middle" fill="#000">4</text>
<text x="1030.79" y="273.60" font-size="11.00" textLength="34.82" lengthAdjust="spacingAndGlyphs" fill="#000">counts</text>
<g transform="translate(878.20,173.00) rotate(-90)">
<text x="-35.72" y="0.00" font-size="11.00" textLength="15.88" lengthAdjust="spacingAndGlyphs" fill="#000">log</text>
<text x="-16.53" y="0.00" font-size="11.00" textLength="52.25" lengthAdjust="spacingAndGlyphs" fill="#000">frequency</text>
</g>
<g transform="translate(1193.80,174.80) rotate(90)">
<text x="-46.76" y="0.00" font-size="11.00" textLength="52.81" lengthAdjust="spacingAndGlyphs" fill="#000">histogram</text>
<text x="9.36" y="0.00" font-size="11.00" textLength="37.40" lengthAdjust="spacingAndGlyphs" fill="#000">(detail)</text>
</g>
<polyline fill="none" stroke="#0000ff" stroke-width="1.6" stroke-linejoin="round" points="912.00,404.80 924.90,404.80 924.90,290.86 930.30,290.86 930.30,393.64 936.00,393.64 936.00,404.80 1185.20,404.80"/>
<rect x="911.00" y="285.00" width="274.20" height="120.00" fill="none" stroke="#000" stroke-width="1.75"/>
<line x1="929.30" y1="405.00" x2="929.30" y2="411.90" stroke="#000" stroke-width="1.75"/>
<text x="929.30" y="428.00" font-size="11.00" text-anchor="middle" fill="#000">0</text>
<line x1="966.60" y1="405.00" x2="966.60" y2="411.90" stroke="#000" stroke-width="1.75"/>
<line x1="1003.90" y1="405.00" x2="1003.90" y2="411.90" stroke="#000" stroke-width="1.75"/>
<text x="988.44" y="428.00" font-size="11.00" textLength="30.93" lengthAdjust="spacingAndGlyphs" fill="#000">20000</text>
<line x1="1041.20" y1="405.00" x2="1041.20" y2="411.90" stroke="#000" stroke-width="1.75"/>
<line x1="1078.50" y1="405.00" x2="1078.50" y2="411.90" stroke="#000" stroke-width="1.75"/>
<text x="1063.04" y="428.00" font-size="11.00" textLength="30.93" lengthAdjust="spacingAndGlyphs" fill="#000">40000</text>
<line x1="1115.80" y1="405.00" x2="1115.80" y2="411.90" stroke="#000" stroke-width="1.75"/>
<line x1="1153.10" y1="405.00" x2="1153.10" y2="411.90" stroke="#000" stroke-width="1.75"/>
<text x="1137.64" y="428.00" font-size="11.00" textLength="30.93" lengthAdjust="spacingAndGlyphs" fill="#000">60000</text>
<line x1="904.10" y1="404.80" x2="911.00" y2="404.80" stroke="#000" stroke-width="1.75"/>
<text x="894.51" y="408.70" font-size="11.00" text-anchor="middle" fill="#000">0</text>
<line x1="904.10" y1="368.80" x2="911.00" y2="368.80" stroke="#000" stroke-width="1.75"/>
<text x="894.51" y="372.70" font-size="11.00" text-anchor="middle" fill="#000">2</text>
<line x1="904.10" y1="332.80" x2="911.00" y2="332.80" stroke="#000" stroke-width="1.75"/>
<text x="894.51" y="336.70" font-size="11.00" text-anchor="middle" fill="#000">4</text>
<line x1="904.10" y1="296.80" x2="911.00" y2="296.80" stroke="#000" stroke-width="1.75"/>
<text x="894.51" y="300.70" font-size="11.00" text-anchor="middle" fill="#000">6</text>
<text x="1030.79" y="445.60" font-size="11.00" textLength="34.82" lengthAdjust="spacingAndGlyphs" fill="#000">counts</text>
<g transform="translate(878.20,345.00) rotate(-90)">
<text x="-35.72" y="0.00" font-size="11.00" textLength="15.88" lengthAdjust="spacingAndGlyphs" fill="#000">log</text>
<text x="-16.53" y="0.00" font-size="11.00" textLength="52.25" lengthAdjust="spacingAndGlyphs" fill="#000">frequency</text>
</g>
<g transform="translate(1193.80,349.30) rotate(90)">
<text x="-40.15" y="0.00" font-size="11.00" textLength="52.81" lengthAdjust="spacingAndGlyphs" fill="#000">histogram</text>
<text x="15.97" y="0.00" font-size="11.00" textLength="24.19" lengthAdjust="spacingAndGlyphs" fill="#000">(full)</text>
</g>
<polyline fill="none" stroke="#0000ff" stroke-width="1.6" stroke-linejoin="round" stroke-miterlimit="3" points="913.1,584.8 913.4,558.0 913.6,579.4 913.9,574.1 914.1,571.4 914.4,576.7 914.6,584.8 914.9,566.0 915.1,568.7 915.4,590.1 915.7,549.9 915.9,563.3 916.2,579.4 916.4,563.3 916.7,576.7 916.9,571.4 917.2,563.3 917.4,582.1 917.7,566.0 918.0,558.0 918.2,560.7 918.5,574.1 918.7,563.3 919.0,587.5 919.2,574.1 919.5,568.7 919.7,584.8 920.0,574.1 920.3,558.0 920.5,549.9 920.8,566.0 921.0,566.0 921.3,584.8 921.5,587.5 921.8,587.5 922.0,571.4 922.3,568.7 922.6,582.1 922.8,587.5 923.1,574.1 923.3,574.1 923.6,579.4 923.8,566.0 924.1,579.4 924.4,579.4 924.6,590.1 924.9,579.4 925.1,568.7 925.4,579.4 925.6,579.4 925.9,576.7 926.1,576.7 926.4,574.1 926.7,574.1 926.9,574.1 927.2,587.5 927.4,576.7 927.7,595.5 927.9,576.7 928.2,590.1 928.4,579.4 928.7,576.7 929.0,584.8 929.2,579.4 929.5,595.5 929.7,587.5 930.0,574.1 930.2,590.1 930.5,574.1 930.7,592.8 931.0,587.5 931.3,590.1 931.5,579.4 931.8,574.1 932.0,590.1 932.3,582.1 932.5,566.0 932.8,582.1 933.0,587.5 933.3,576.7 933.6,582.1 933.8,587.5 934.1,595.5 934.3,571.4 934.6,584.8 934.8,579.4 935.1,590.1 935.3,568.7 935.6,574.1 935.9,571.4 936.1,582.1 936.4,576.7 936.6,571.4 936.9,571.4 937.1,576.7 937.4,579.4 937.6,582.1 937.9,587.5 938.2,587.5 938.4,576.7 938.7,582.1 938.9,598.2 939.2,582.1 939.4,571.4 939.7,582.1 939.9,598.2 940.2,582.1 940.5,574.1 940.7,579.4 941.0,584.8 941.2,563.3 941.5,563.3 941.7,582.1 942.0,571.4 942.2,576.7 942.5,574.1 942.8,566.0 943.0,571.4 943.3,579.4 943.5,584.8 943.8,587.5 944.0,579.4 944.3,568.7 944.6,576.7 944.8,579.4 945.1,576.7 945.3,579.4 945.6,574.1 945.8,590.1 946.1,598.2 946.3,584.8 946.6,590.1 946.9,566.0 947.1,582.1 947.4,582.1 947.6,592.8 947.9,576.7 948.1,584.8 948.4,568.7 948.6,571.4 948.9,587.5 949.2,576.7 949.4,603.5 949.7,584.8 949.9,568.7 950.2,574.1 950.4,579.4 950.7,579.4 950.9,592.8 951.2,592.8 951.5,576.7 951.7,563.3 952.0,600.9 952.2,574.1 952.5,574.1 952.7,571.4 953.0,587.5 953.2,584.8 953.5,579.4 953.8,590.1 954.0,590.1 954.3,587.5 954.5,579.4 954.8,576.7 955.0,579.4 955.3,579.4 955.5,587.5 955.8,587.5 956.1,568.7 956.3,579.4 956.6,579.4 956.8,571.4 957.1,568.7 957.3,568.7 957.6,576.7 957.8,579.4 958.1,576.7 958.4,579.4 958.6,566.0 958.9,576.7 959.1,574.1 959.4,579.4 959.6,568.7 959.9,598.2 960.1,576.7 960.4,574.1 960.7,590.1 960.9,560.7 961.2,582.1 961.4,582.1 961.7,590.1 961.9,571.4 962.2,576.7 962.5,584.8 962.7,576.7 963.0,574.1 963.2,568.7 963.5,576.7 963.7,587.5 964.0,584.8 964.2,600.9 964.5,587.5 964.8,574.1 965.0,576.7 965.3,582.1 965.5,582.1 965.8,566.0 966.0,576.7 966.3,571.4 966.5,576.7 966.8,584.8 967.1,566.0 967.3,590.1 967.6,590.1 967.8,584.8 968.1,587.5 968.3,584.8 968.6,584.8 968.8,571.4 969.1,579.4 969.4,576.7 969.6,595.5 969.9,587.5 970.1,571.4 970.4,590.1 970.6,568.7 970.9,590.1 971.1,576.7 971.4,587.5 971.7,579.4 971.9,587.5 972.2,582.1 972.4,566.0 972.7,582.1 972.9,560.7 973.2,584.8 973.4,590.1 973.7,579.4 974.0,584.8 974.2,563.3 974.5,571.4 974.7,568.7 975.0,574.1 975.2,558.0 975.5,571.4 975.7,574.1 976.0,587.5 976.3,587.5 976.5,579.4 976.8,571.4 977.0,568.7 977.3,587.5 977.5,574.1 977.8,579.4 978.0,590.1 978.3,574.1 978.6,600.9 978.8,576.7 979.1,558.0 979.3,590.1 979.6,579.4 979.8,595.5 980.1,587.5 980.3,571.4 980.6,590.1 980.9,579.4 981.1,582.1 981.4,582.1 981.6,576.7 981.9,574.1 982.1,568.7 982.4,571.4 982.7,584.8 982.9,566.0 983.2,568.7 983.4,592.8 983.7,574.1 983.9,571.4 984.2,571.4 984.4,574.1 984.7,590.1 985.0,582.1 985.2,598.2 985.5,579.4 985.7,560.7 986.0,571.4 986.2,571.4 986.5,582.1 986.7,587.5 987.0,587.5 987.3,576.7 987.5,584.8 987.8,584.8 988.0,568.7 988.3,592.8 988.5,590.1 988.8,582.1 989.0,579.4 989.3,579.4 989.6,590.1 989.8,576.7 990.1,579.4 990.3,574.1 990.6,587.5 990.8,576.7 991.1,576.7 991.3,584.8 991.6,579.4 991.9,582.1 992.1,566.0 992.4,606.2 992.6,590.1 992.9,592.8 993.1,582.1 993.4,584.8 993.6,582.1 993.9,571.4 994.2,592.8 994.4,584.8 994.7,579.4 994.9,590.1 995.2,574.1 995.4,574.1 995.7,584.8 995.9,592.8 996.2,563.3 996.5,574.1 996.7,574.1 997.0,576.7 997.2,576.7 997.5,571.4 997.7,576.7 998.0,584.8 998.2,571.4 998.5,576.7 998.8,584.8 999.0,587.5 999.3,566.0 999.5,571.4 999.8,560.7 1000.0,582.1 1000.3,584.8 1000.5,574.1 1000.8,566.0 1001.1,571.4 1001.3,574.1 1001.6,560.7 1001.8,584.8 1002.1,590.1 1002.3,584.8 1002.6,579.4 1002.9,574.1 1003.1,568.7 1003.4,574.1 1003.6,563.3 1003.9,584.8 1004.1,560.7 1004.4,584.8 1004.6,566.0 1004.9,587.5 1005.2,574.1 1005.4,576.7 1005.7,574.1 1005.9,571.4 1006.2,579.4 1006.4,579.4 1006.7,576.7 1006.9,590.1 1007.2,584.8 1007.5,592.8 1007.7,576.7 1008.0,558.0 1008.2,571.4 1008.5,584.8 1008.7,584.8 1009.0,568.7 1009.2,582.1 1009.5,592.8 1009.8,587.5 1010.0,587.5 1010.3,587.5 1010.5,571.4 1010.8,576.7 1011.0,590.1 1011.3,582.1 1011.5,587.5 1011.8,587.5 1012.1,590.1 1012.3,560.7 1012.6,579.4 1012.8,571.4 1013.1,568.7 1013.3,582.1 1013.6,571.4 1013.8,571.4 1014.1,576.7 1014.4,558.0 1014.6,574.1 1014.9,579.4 1015.1,571.4 1015.4,560.7 1015.6,568.7 1015.9,582.1 1016.1,584.8 1016.4,584.8 1016.7,584.8 1016.9,574.1 1017.2,568.7 1017.4,598.2 1017.7,576.7 1017.9,587.5 1018.2,571.4 1018.4,568.7 1018.7,584.8 1019.0,582.1 1019.2,584.8 1019.5,574.1 1019.7,592.8 1020.0,587.5 1020.2,584.8 1020.5,566.0 1020.7,555.3 1021.0,576.7 1021.3,587.5 1021.5,576.7 1021.8,584.8 1022.0,574.1 1022.3,587.5 1022.5,579.4 1022.8,576.7 1023.1,571.4 1023.3,576.7 1023.6,566.0 1023.8,576.7 1024.1,592.8 1024.3,568.7 1024.6,579.4 1024.8,582.1 1025.1,563.3 1025.4,587.5 1025.6,576.7 1025.9,584.8 1026.1,566.0 1026.4,579.4 1026.6,574.1 1026.9,590.1 1027.1,563.3 1027.4,587.5 1027.7,568.7 1027.9,566.0 1028.2,563.3 1028.4,558.0 1028.7,584.8 1028.9,571.4 1029.2,574.1 1029.4,571.4 1029.7,563.3 1030.0,574.1 1030.2,582.1 1030.5,574.1 1030.7,560.7 1031.0,584.8 1031.2,574.1 1031.5,582.1 1031.7,563.3 1032.0,590.1 1032.3,576.7 1032.5,574.1 1032.8,574.1 1033.0,552.6 1033.3,560.7 1033.5,582.1 1033.8,555.3 1034.0,584.8 1034.3,590.1 1034.6,587.5 1034.8,571.4 1035.1,568.7 1035.3,592.8 1035.6,568.7 1035.8,576.7 1036.1,568.7 1036.3,576.7 1036.6,566.0 1036.9,568.7 1037.1,584.8 1037.4,560.7 1037.6,571.4 1037.9,566.0 1038.1,563.3 1038.4,582.1 1038.6,574.1 1038.9,582.1 1039.2,582.1 1039.4,571.4 1039.7,571.4 1039.9,560.7 1040.2,560.7 1040.4,574.1 1040.7,582.1 1041.0,544.6 1041.2,555.3 1041.5,574.1 1041.7,582.1 1042.0,576.7 1042.2,571.4 1042.5,563.3 1042.7,566.0 1043.0,568.7 1043.3,576.7 1043.5,571.4 1043.8,576.7 1044.0,574.1 1044.3,574.1 1044.5,568.7 1044.8,590.1 1045.0,576.7 1045.3,576.7 1045.6,584.8 1045.8,574.1 1046.1,582.1 1046.3,579.4 1046.6,576.7 1046.8,576.7 1047.1,579.4 1047.3,563.3 1047.6,571.4 1047.9,571.4 1048.1,571.4 1048.4,579.4 1048.6,582.1 1048.9,566.0 1049.1,576.7 1049.4,590.1 1049.6,592.8 1049.9,571.4 1050.2,579.4 1050.4,574.1 1050.7,579.4 1050.9,576.7 1051.2,574.1 1051.4,584.8 1051.7,574.1 1051.9,563.3 1052.2,566.0 1052.5,590.1 1052.7,584.8 1053.0,584.8 1053.2,576.7 1053.5,566.0 1053.7,571.4 1054.0,590.1 1054.2,571.4 1054.5,566.0 1054.8,576.7 1055.0,555.3 1055.3,579.4 1055.5,563.3 1055.8,552.6 1056.0,584.8 1056.3,576.7 1056.5,568.7 1056.8,544.6 1057.1,590.1 1057.3,568.7 1057.6,571.4 1057.8,576.7 1058.1,579.4 1058.3,576.7 1058.6,576.7 1058.8,584.8 1059.1,558.0 1059.4,582.1 1059.6,576.7 1059.9,579.4 1060.1,576.7 1060.4,571.4 1060.6,579.4 1060.9,574.1 1061.2,558.0 1061.4,563.3 1061.7,576.7 1061.9,563.3 1062.2,579.4 1062.4,571.4 1062.7,584.8 1062.9,582.1 1063.2,579.4 1063.5,560.7 1063.7,571.4 1064.0,568.7 1064.2,571.4 1064.5,568.7 1064.7,568.7 1065.0,566.0 1065.2,571.4 1065.5,582.1 1065.8,579.4 1066.0,560.7 1066.3,560.7 1066.5,568.7 1066.8,587.5 1067.0,558.0 1067.3,568.7 1067.5,574.1 1067.8,571.4 1068.1,576.7 1068.3,555.3 1068.6,558.0 1068.8,582.1 1069.1,574.1 1069.3,568.7 1069.6,560.7 1069.8,595.5 1070.1,563.3 1070.4,558.0 1070.6,576.7 1070.9,574.1 1071.1,560.7 1071.4,568.7 1071.6,584.8 1071.9,582.1 1072.1,582.1 1072.4,584.8 1072.7,571.4 1072.9,576.7 1073.2,571.4 1073.4,566.0 1073.7,555.3 1073.9,571.4 1074.2,590.1 1074.4,560.7 1074.7,574.1 1075.0,560.7 1075.2,576.7 1075.5,568.7 1075.7,574.1 1076.0,571.4 1076.2,560.7 1076.5,579.4 1076.7,571.4 1077.0,571.4 1077.3,576.7 1077.5,592.8 1077.8,568.7 1078.0,598.2 1078.3,584.8 1078.5,576.7 1078.8,568.7 1079.0,563.3 1079.3,563.3 1079.6,566.0 1079.8,574.1 1080.1,560.7 1080.3,574.1 1080.6,560.7 1080.8,592.8 1081.1,579.4 1081.4,576.7 1081.6,571.4 1081.9,592.8 1082.1,563.3 1082.4,563.3 1082.6,563.3 1082.9,576.7 1083.1,558.0 1083.4,576.7 1083.7,563.3 1083.9,571.4 1084.2,571.4 1084.4,574.1 1084.7,571.4 1084.9,560.7 1085.2,558.0 1085.4,558.0 1085.7,563.3 1086.0,566.0 1086.2,566.0 1086.5,555.3 1086.7,576.7 1087.0,576.7 1087.2,571.4 1087.5,587.5 1087.7,574.1 1088.0,571.4 1088.3,579.4 1088.5,576.7 1088.8,566.0 1089.0,574.1 1089.3,571.4 1089.5,560.7 1089.8,576.7 1090.0,582.1 1090.3,571.4 1090.6,566.0 1090.8,587.5 1091.1,566.0 1091.3,574.1 1091.6,574.1 1091.8,579.4 1092.1,571.4 1092.3,563.3 1092.6,566.0 1092.9,563.3 1093.1,574.1 1093.4,555.3 1093.6,560.7 1093.9,571.4 1094.1,595.5 1094.4,571.4 1094.6,544.6 1094.9,571.4 1095.2,579.4 1095.4,555.3 1095.7,576.7 1095.9,566.0 1096.2,563.3 1096.4,584.8 1096.7,568.7 1096.9,560.7 1097.2,574.1 1097.5,566.0 1097.7,571.4 1098.0,560.7 1098.2,555.3 1098.5,582.1 1098.7,574.1 1099.0,566.0 1099.2,576.7 1099.5,579.4 1099.8,574.1 1100.0,574.1 1100.3,576.7 1100.5,568.7 1100.8,563.3 1101.0,563.3 1101.3,566.0 1101.6,560.7 1101.8,582.1 1102.1,571.4 1102.3,568.7 1102.6,566.0 1102.8,584.8 1103.1,552.6 1103.3,579.4 1103.6,568.7 1103.9,563.3 1104.1,560.7 1104.4,576.7 1104.6,576.7 1104.9,568.7 1105.1,566.0 1105.4,563.3 1105.6,571.4 1105.9,576.7 1106.2,582.1 1106.4,555.3 1106.7,584.8 1106.9,563.3 1107.2,568.7 1107.4,563.3 1107.7,563.3 1107.9,558.0 1108.2,571.4 1108.5,566.0 1108.7,587.5 1109.0,571.4 1109.2,579.4 1109.5,571.4 1109.7,560.7 1110.0,568.7 1110.2,560.7 1110.5,574.1 1110.8,566.0 1111.0,574.1 1111.3,592.8 1111.5,576.7 1111.8,574.1 1112.0,568.7 1112.3,571.4 1112.5,571.4 1112.8,563.3 1113.1,566.0 1113.3,574.1 1113.6,563.3 1113.8,590.1 1114.1,574.1 1114.3,571.4 1114.6,558.0 1114.8,576.7 1115.1,584.8 1115.4,568.7 1115.6,555.3 1115.9,574.1 1116.1,571.4 1116.4,574.1 1116.6,571.4 1116.9,558.0 1117.1,552.6 1117.4,566.0 1117.7,571.4 1117.9,555.3 1118.2,568.7 1118.4,571.4 1118.7,574.1 1118.9,574.1 1119.2,568.7 1119.4,574.1 1119.7,566.0 1120.0,568.7 1120.2,566.0 1120.5,574.1 1120.7,571.4 1121.0,568.7 1121.2,571.4 1121.5,568.7 1121.8,560.7 1122.0,579.4 1122.3,587.5 1122.5,563.3 1122.8,574.1 1123.0,558.0 1123.3,571.4 1123.5,582.1 1123.8,549.9 1124.1,566.0 1124.3,574.1 1124.6,576.7 1124.8,566.0 1125.1,576.7 1125.3,566.0 1125.6,560.7 1125.8,584.8 1126.1,574.1 1126.4,566.0 1126.6,555.3 1126.9,563.3 1127.1,574.1 1127.4,558.0 1127.6,574.1 1127.9,571.4 1128.1,568.7 1128.4,582.1 1128.7,541.9 1128.9,560.7 1129.2,568.7 1129.4,576.7 1129.7,582.1 1129.9,568.7 1130.2,563.3 1130.4,574.1 1130.7,574.1 1131.0,566.0 1131.2,571.4 1131.5,587.5 1131.7,566.0 1132.0,568.7 1132.2,563.3 1132.5,576.7 1132.7,590.1 1133.0,582.1 1133.3,568.7 1133.5,552.6 1133.8,549.9 1134.0,568.7 1134.3,584.8 1134.5,574.1 1134.8,566.0 1135.0,566.0 1135.3,571.4 1135.6,558.0 1135.8,579.4 1136.1,590.1 1136.3,579.4 1136.6,582.1 1136.8,549.9 1137.1,574.1 1137.3,584.8 1137.6,566.0 1137.9,560.7 1138.1,571.4 1138.4,568.7 1138.6,560.7 1138.9,566.0 1139.1,576.7 1139.4,566.0 1139.7,563.3 1139.9,568.7 1140.2,563.3 1140.4,566.0 1140.7,574.1 1140.9,571.4 1141.2,566.0 1141.4,576.7 1141.7,560.7 1142.0,560.7 1142.2,590.1 1142.5,571.4 1142.7,576.7 1143.0,576.7 1143.2,568.7 1143.5,571.4 1143.7,566.0 1144.0,568.7 1144.3,568.7 1144.5,579.4 1144.8,574.1 1145.0,558.0 1145.3,592.8 1145.5,555.3 1145.8,576.7 1146.0,560.7 1146.3,595.5 1146.6,574.1 1146.8,563.3 1147.1,568.7 1147.3,560.7 1147.6,579.4 1147.8,576.7 1148.1,576.7 1148.3,566.0 1148.6,566.0 1148.9,571.4 1149.1,574.1 1149.4,574.1 1149.6,571.4 1149.9,579.4 1150.1,571.4 1150.4,571.4 1150.6,576.7 1150.9,576.7 1151.2,558.0 1151.4,576.7 1151.7,568.7 1151.9,558.0 1152.2,563.3 1152.4,571.4 1152.7,560.7 1152.9,584.8 1153.2,582.1 1153.5,574.1 1153.7,574.1 1154.0,571.4 1154.2,555.3 1154.5,555.3 1154.7,571.4 1155.0,568.7 1155.2,579.4 1155.5,568.7 1155.8,584.8 1156.0,558.0 1156.3,576.7 1156.5,566.0 1156.8,582.1 1157.0,558.0 1157.3,566.0 1157.5,552.6 1157.8,571.4 1158.1,584.8 1158.3,579.4 1158.6,582.1 1158.8,558.0 1159.1,576.7 1159.3,579.4 1159.6,566.0 1159.9,568.7 1160.1,566.0 1160.4,576.7 1160.6,590.1 1160.9,584.8 1161.1,590.1 1161.4,560.7 1161.6,563.3 1161.9,574.1 1162.2,566.0 1162.4,566.0 1162.7,566.0 1162.9,566.0 1163.2,563.3 1163.4,571.4 1163.7,592.8 1163.9,595.5 1164.2,560.7 1164.5,566.0 1164.7,595.5 1165.0,568.7 1165.2,579.4 1165.5,576.7 1165.7,595.5 1166.0,563.3 1166.2,571.4 1166.5,563.3 1166.8,560.7 1167.0,560.7 1167.3,555.3 1167.5,568.7 1167.8,568.7 1168.0,576.7 1168.3,566.0 1168.5,574.1 1168.8,582.1 1169.1,560.7 1169.3,566.0 1169.6,595.5 1169.8,587.5 1170.1,574.1 1170.3,584.8 1170.6,560.7 1170.8,568.7 1171.1,566.0 1171.4,563.3 1171.6,558.0 1171.9,574.1 1172.1,566.0 1172.4,568.7 1172.6,563.3 1172.9,566.0 1173.1,558.0 1173.4,566.0 1173.7,576.7 1173.9,571.4 1174.2,582.1 1174.4,568.7 1174.7,558.0 1174.9,576.7 1175.2,587.5 1175.4,571.4 1175.7,576.7 1176.0,571.4 1176.2,576.7 1176.5,571.4 1176.7,579.4 1177.0,558.0 1177.2,574.1 1177.5,566.0 1177.7,563.3 1178.0,571.4 1178.3,566.0 1178.5,574.1 1178.8,574.1 1179.0,574.1 1179.3,566.0 1179.5,582.1 1179.8,579.4 1180.1,579.4 1180.3,576.7 1180.6,560.7 1180.8,571.4 1181.1,574.1 1181.3,568.7 1181.6,560.7 1181.8,576.7 1182.1,560.7"/>
<rect x="911.00" y="517.00" width="274.20" height="120.00" fill="none" stroke="#000" stroke-width="1.75"/>
<line x1="913.10" y1="637.00" x2="913.10" y2="643.90" stroke="#000" stroke-width="1.75"/>
<text x="913.10" y="660.00" font-size="11.00" text-anchor="middle" fill="#000">0</text>
<line x1="964.24" y1="637.00" x2="964.24" y2="643.90" stroke="#000" stroke-width="1.75"/>
<text x="954.96" y="660.00" font-size="11.00" textLength="18.56" lengthAdjust="spacingAndGlyphs" fill="#000">200</text>
<line x1="1015.38" y1="637.00" x2="1015.38" y2="643.90" stroke="#000" stroke-width="1.75"/>
<text x="1006.10" y="660.00" font-size="11.00" textLength="18.56" lengthAdjust="spacingAndGlyphs" fill="#000">400</text>
<line x1="1066.52" y1="637.00" x2="1066.52" y2="643.90" stroke="#000" stroke-width="1.75"/>
<text x="1057.24" y="660.00" font-size="11.00" textLength="18.56" lengthAdjust="spacingAndGlyphs" fill="#000">600</text>
<line x1="1117.66" y1="637.00" x2="1117.66" y2="643.90" stroke="#000" stroke-width="1.75"/>
<text x="1108.38" y="660.00" font-size="11.00" textLength="18.56" lengthAdjust="spacingAndGlyphs" fill="#000">800</text>
<line x1="1168.80" y1="637.00" x2="1168.80" y2="643.90" stroke="#000" stroke-width="1.75"/>
<text x="1156.43" y="660.00" font-size="11.00" textLength="24.74" lengthAdjust="spacingAndGlyphs" fill="#000">1000</text>
<line x1="904.10" y1="622.30" x2="911.00" y2="622.30" stroke="#000" stroke-width="1.75"/>
<text x="879.04" y="626.20" font-size="11.00" textLength="18.56" lengthAdjust="spacingAndGlyphs" fill="#000">960</text>
<line x1="904.10" y1="595.50" x2="911.00" y2="595.50" stroke="#000" stroke-width="1.75"/>
<text x="879.04" y="599.40" font-size="11.00" textLength="18.56" lengthAdjust="spacingAndGlyphs" fill="#000">970</text>
<line x1="904.10" y1="568.70" x2="911.00" y2="568.70" stroke="#000" stroke-width="1.75"/>
<text x="879.04" y="572.60" font-size="11.00" textLength="18.56" lengthAdjust="spacingAndGlyphs" fill="#000">980</text>
<line x1="904.10" y1="541.90" x2="911.00" y2="541.90" stroke="#000" stroke-width="1.75"/>
<text x="879.04" y="545.80" font-size="11.00" textLength="18.56" lengthAdjust="spacingAndGlyphs" fill="#000">990</text>
<text x="1048.20" y="677.60" font-size="11.00" text-anchor="middle" fill="#000">X</text>
<g transform="translate(865.90,577.00) rotate(-90)">
<text x="-17.41" y="0.00" font-size="11.00" textLength="34.82" lengthAdjust="spacingAndGlyphs" fill="#000">counts</text>
</g>
<g transform="translate(1193.80,575.30) rotate(90)">
<text x="-19.35" y="0.00" font-size="11.00" textLength="16.41" lengthAdjust="spacingAndGlyphs" fill="#000">cut</text>
<text x="0.38" y="0.00" font-size="11.00" textLength="9.50" lengthAdjust="spacingAndGlyphs" fill="#000">in</text>
<text x="16.27" y="0.00" font-size="11.00" text-anchor="middle" fill="#000">x</text>
</g>
<polyline fill="none" stroke="#0000ff" stroke-width="1.6" stroke-linejoin="round" stroke-miterlimit="3" points="911.9,764.7 912.0,751.3 912.2,729.9 912.3,729.9 912.4,743.3 912.6,748.6 912.7,737.9 912.8,748.6 913.0,729.9 913.1,732.6 913.3,737.9 913.4,751.3 913.5,735.2 913.7,746.0 913.8,746.0 913.9,748.6 914.1,746.0 914.2,740.6 914.3,735.2 914.5,735.2 914.6,713.8 914.7,748.6 914.9,732.6 915.0,751.3 915.2,746.0 915.3,754.0 915.4,732.6 915.6,740.6 915.7,743.3 915.8,746.0 916.0,735.2 916.1,748.6 916.2,740.6 916.4,721.8 916.5,746.0 916.6,748.6 916.8,754.0 916.9,737.9 917.1,743.3 917.2,751.3 917.3,751.3 917.5,743.3 917.6,754.0 917.7,724.5 917.9,746.0 918.0,746.0 918.1,746.0 918.3,762.0 918.4,756.7 918.5,748.6 918.7,743.3 918.8,756.7 919.0,729.9 919.1,740.6 919.2,732.6 919.4,732.6 919.5,746.0 919.6,721.8 919.8,743.3 919.9,762.0 920.0,764.7 920.2,743.3 920.3,735.2 920.4,743.3 920.6,729.9 920.7,746.0 920.8,740.6 921.0,737.9 921.1,754.0 921.3,740.6 921.4,740.6 921.5,735.2 921.7,732.6 921.8,735.2 921.9,751.3 922.1,737.9 922.2,735.2 922.3,743.3 922.5,737.9 922.6,737.9 922.7,732.6 922.9,743.3 923.0,740.6 923.2,743.3 923.3,743.3 923.4,751.3 923.6,748.6 923.7,754.0 923.8,746.0 924.0,737.9 924.1,737.9 924.2,737.9 924.4,746.0 924.5,732.6 924.6,748.6 924.8,737.9 924.9,740.6 925.1,751.3 925.2,751.3 925.3,737.9 925.5,743.3 925.6,743.3 925.7,716.5 925.9,740.6 926.0,743.3 926.1,737.9 926.3,751.3 926.4,746.0 926.5,740.6 926.7,751.3 926.8,746.0 927.0,746.0 927.1,743.3 927.2,762.0 927.4,729.9 927.5,746.0 927.6,740.6 927.8,754.0 927.9,756.7 928.0,746.0 928.2,748.6 928.3,737.9 928.4,754.0 928.6,754.0 928.7,740.6 928.9,737.9 929.0,737.9 929.1,746.0 929.3,743.3 929.4,751.3 929.5,732.6 929.7,735.2 929.8,735.2 929.9,759.4 930.1,737.9 930.2,751.3 930.3,740.6 930.5,740.6 930.6,735.2 930.7,746.0 930.9,748.6 931.0,754.0 931.2,756.7 931.3,740.6 931.4,754.0 931.6,737.9 931.7,748.6 931.8,751.3 932.0,735.2 932.1,737.9 932.2,754.0 932.4,746.0 932.5,746.0 932.6,737.9 932.8,751.3 932.9,748.6 933.1,746.0 933.2,737.9 933.3,737.9 933.5,751.3 933.6,729.9 933.7,740.6 933.9,751.3 934.0,759.4 934.1,748.6 934.3,767.4 934.4,743.3 934.5,740.6 934.7,732.6 934.8,740.6 935.0,762.0 935.1,748.6 935.2,737.9 935.4,764.7 935.5,754.0 935.6,740.6 935.8,746.0 935.9,764.7 936.0,751.3 936.2,746.0 936.3,727.2 936.4,748.6 936.6,754.0 936.7,743.3 936.9,743.3 937.0,740.6 937.1,732.6 937.3,746.0 937.4,759.4 937.5,746.0 937.7,746.0 937.8,737.9 937.9,737.9 938.1,751.3 938.2,737.9 938.3,735.2 938.5,746.0 938.6,737.9 938.7,743.3 938.9,743.3 939.0,746.0 939.2,737.9 939.3,719.2 939.4,743.3 939.6,756.7 939.7,748.6 939.8,751.3 940.0,743.3 940.1,746.0 940.2,721.8 940.4,737.9 940.5,729.9 940.6,751.3 940.8,748.6 940.9,727.2 941.1,762.0 941.2,743.3 941.3,759.4 941.5,732.6 941.6,759.4 941.7,748.6 941.9,746.0 942.0,762.0 942.1,724.5 942.3,746.0 942.4,729.9 942.5,751.3 942.7,759.4 942.8,743.3 943.0,743.3 943.1,719.2 943.2,754.0 943.4,759.4 943.5,751.3 943.6,743.3 943.8,740.6 943.9,751.3 944.0,748.6 944.2,740.6 944.3,735.2 944.4,751.3 944.6,746.0 944.7,770.1 944.9,754.0 945.0,740.6 945.1,746.0 945.3,748.6 945.4,729.9 945.5,748.6 945.7,756.7 945.8,743.3 945.9,743.3 946.1,756.7 946.2,737.9 946.3,729.9 946.5,751.3 946.6,754.0 946.7,746.0 946.9,735.2 947.0,751.3 947.2,751.3 947.3,751.3 947.4,743.3 947.6,743.3 947.7,748.6 947.8,735.2 948.0,724.5 948.1,751.3 948.2,735.2 948.4,743.3 948.5,719.2 948.6,754.0 948.8,748.6 948.9,746.0 949.1,759.4 949.2,748.6 949.3,740.6 949.5,759.4 949.6,746.0 949.7,729.9 949.9,751.3 950.0,754.0 950.1,770.1 950.3,746.0 950.4,762.0 950.5,740.6 950.7,729.9 950.8,740.6 951.0,754.0 951.1,740.6 951.2,751.3 951.4,756.7 951.5,751.3 951.6,743.3 951.8,748.6 951.9,740.6 952.0,727.2 952.2,740.6 952.3,737.9 952.4,751.3 952.6,732.6 952.7,743.3 952.9,737.9 953.0,754.0 953.1,743.3 953.3,767.4 953.4,748.6 953.5,754.0 953.7,754.0 953.8,729.9 953.9,759.4 954.1,748.6 954.2,748.6 954.3,740.6 954.5,737.9 954.6,762.0 954.7,751.3 954.9,751.3 955.0,740.6 955.2,737.9 955.3,748.6 955.4,751.3 955.6,756.7 955.7,743.3 955.8,729.9 956.0,743.3 956.1,751.3 956.2,754.0 956.4,754.0 956.5,762.0 956.6,729.9 956.8,746.0 956.9,748.6 957.1,727.2 957.2,743.3 957.3,732.6 957.5,743.3 957.6,735.2 957.7,746.0 957.9,748.6 958.0,743.3 958.1,740.6 958.3,735.2 958.4,743.3 958.5,748.6 958.7,748.6 958.8,743.3 959.0,751.3 959.1,748.6 959.2,740.6 959.4,740.6 959.5,740.6 959.6,754.0 959.8,759.4 959.9,743.3 960.0,746.0 960.2,748.6 960.3,743.3 960.4,737.9 960.6,748.6 960.7,743.3 960.9,754.0 961.0,748.6 961.1,754.0 961.3,759.4 961.4,743.3 961.5,772.8 961.7,746.0 961.8,740.6 961.9,743.3 962.1,759.4 962.2,743.3 962.3,762.0 962.5,754.0 962.6,732.6 962.8,746.0 962.9,735.2 963.0,756.7 963.2,764.7 963.3,754.0 963.4,735.2 963.6,737.9 963.7,737.9 963.8,748.6 964.0,746.0 964.1,748.6 964.2,719.2 964.4,746.0 964.5,729.9 964.6,748.6 964.8,732.6 964.9,756.7 965.1,751.3 965.2,743.3 965.3,751.3 965.5,751.3 965.6,748.6 965.7,751.3 965.9,732.6 966.0,735.2 966.1,759.4 966.3,729.9 966.4,746.0 966.5,746.0 966.7,748.6 966.8,737.9 967.0,740.6 967.1,751.3 967.2,746.0 967.4,759.4 967.5,729.9 967.6,754.0 967.8,754.0 967.9,754.0 968.0,746.0 968.2,740.6 968.3,748.6 968.4,746.0 968.6,748.6 968.7,735.2 968.9,743.3 969.0,762.0 969.1,732.6 969.3,743.3 969.4,729.9 969.5,751.3 969.7,751.3 969.8,748.6 969.9,759.4 970.1,748.6 970.2,735.2 970.3,740.6 970.5,767.4 970.6,735.2 970.8,743.3 970.9,737.9 971.0,746.0 971.2,743.3 971.3,746.0 971.4,746.0 971.6,756.7 971.7,737.9 971.8,743.3 972.0,743.3 972.1,743.3 972.2,748.6 972.4,746.0 972.5,759.4 972.6,743.3 972.8,743.3 972.9,748.6 973.1,762.0 973.2,735.2 973.3,748.6 973.5,746.0 973.6,748.6 973.7,751.3 973.9,748.6 974.0,756.7 974.1,751.3 974.3,727.2 974.4,735.2 974.5,727.2 974.7,751.3 974.8,764.7 975.0,759.4 975.1,770.1 975.2,735.2 975.4,735.2 975.5,746.0 975.6,743.3 975.8,743.3 975.9,748.6 976.0,740.6 976.2,756.7 976.3,751.3 976.4,748.6 976.6,762.0 976.7,756.7 976.9,743.3 977.0,743.3 977.1,770.1 977.3,737.9 977.4,743.3 977.5,740.6 977.7,746.0 977.8,740.6 977.9,759.4 978.1,748.6 978.2,756.7 978.3,751.3 978.5,735.2 978.6,732.6 978.8,746.0 978.9,751.3 979.0,737.9 979.2,743.3 979.3,729.9 979.4,740.6 979.6,767.4 979.7,746.0 979.8,748.6 980.0,754.0 980.1,746.0 980.2,746.0 980.4,748.6 980.5,732.6 980.6,743.3 980.8,743.3 980.9,746.0 981.1,735.2 981.2,756.7 981.3,735.2 981.5,748.6 981.6,732.6 981.7,732.6 981.9,740.6 982.0,751.3 982.1,743.3 982.3,743.3 982.4,759.4 982.5,748.6 982.7,754.0 982.8,732.6 983.0,729.9 983.1,754.0 983.2,751.3 983.4,759.4 983.5,743.3 983.6,737.9 983.8,729.9 983.9,759.4 984.0,737.9 984.2,748.6 984.3,754.0 984.4,748.6 984.6,754.0 984.7,743.3 984.9,746.0 985.0,735.2 985.1,751.3 985.3,764.7 985.4,756.7 985.5,743.3 985.7,759.4 985.8,754.0 985.9,740.6 986.1,759.4 986.2,737.9 986.3,743.3 986.5,751.3 986.6,746.0 986.8,751.3 986.9,751.3 987.0,748.6 987.2,746.0 987.3,748.6 987.4,754.0 987.6,756.7 987.7,727.2 987.8,756.7 988.0,748.6 988.1,735.2 988.2,737.9 988.4,754.0 988.5,727.2 988.6,729.9 988.8,748.6 988.9,756.7 989.1,740.6 989.2,748.6 989.3,748.6 989.5,754.0 989.6,751.3 989.7,746.0 989.9,737.9 990.0,764.7 990.1,767.4 990.3,737.9 990.4,754.0 990.5,740.6 990.7,746.0 990.8,735.2 991.0,737.9 991.1,748.6 991.2,748.6 991.4,743.3 991.5,740.6 991.6,751.3 991.8,759.4 991.9,746.0 992.0,746.0 992.2,748.6 992.3,756.7 992.4,740.6 992.6,762.0 992.7,751.3 992.9,735.2 993.0,756.7 993.1,743.3 993.3,743.3 993.4,743.3 993.5,762.0 993.7,737.9 993.8,746.0 993.9,743.3 994.1,743.3 994.2,746.0 994.3,735.2 994.5,732.6 994.6,764.7 994.8,754.0 994.9,748.6 995.0,767.4 995.2,732.6 995.3,754.0 995.4,740.6 995.6,743.3 995.7,748.6 995.8,756.7 996.0,748.6 996.1,746.0 996.2,740.6 996.4,748.6 996.5,751.3 996.6,748.6 996.8,735.2 996.9,743.3 997.1,751.3 997.2,756.7 997.3,751.3 997.5,754.0 997.6,751.3 997.7,735.2 997.9,740.6 998.0,743.3 998.1,743.3 998.3,729.9 998.4,756.7 998.5,743.3 998.7,748.6 998.8,746.0 999.0,746.0 999.1,748.6 999.2,740.6 999.4,767.4 999.5,743.3 999.6,740.6 999.8,754.0 999.9,756.7 1000.0,729.9 1000.2,754.0 1000.3,748.6 1000.4,754.0 1000.6,751.3 1000.7,751.3 1000.9,764.7 1001.0,724.5 1001.1,754.0 1001.3,743.3 1001.4,746.0 1001.5,735.2 1001.7,740.6 1001.8,735.2 1001.9,735.2 1002.1,737.9 1002.2,746.0 1002.3,737.9 1002.5,762.0 1002.6,737.9 1002.8,740.6 1002.9,743.3 1003.0,759.4 1003.2,735.2 1003.3,754.0 1003.4,740.6 1003.6,762.0 1003.7,748.6 1003.8,751.3 1004.0,754.0 1004.1,751.3 1004.2,729.9 1004.4,746.0 1004.5,743.3 1004.7,727.2 1004.8,759.4 1004.9,732.6 1005.1,748.6 1005.2,751.3 1005.3,751.3 1005.5,762.0 1005.6,759.4 1005.7,756.7 1005.9,751.3 1006.0,740.6 1006.1,737.9 1006.3,748.6 1006.4,743.3 1006.5,743.3 1006.7,748.6 1006.8,743.3 1007.0,751.3 1007.1,740.6 1007.2,748.6 1007.4,746.0 1007.5,743.3 1007.6,746.0 1007.8,754.0 1007.9,759.4 1008.0,746.0 1008.2,751.3 1008.3,751.3 1008.4,748.6 1008.6,754.0 1008.7,743.3 1008.9,743.3 1009.0,754.0 1009.1,743.3 1009.3,756.7 1009.4,740.6 1009.5,740.6 1009.7,746.0 1009.8,737.9 1009.9,737.9 1010.1,743.3 1010.2,762.0 1010.3,746.0 1010.5,746.0 1010.6,740.6 1010.8,756.7 1010.9,740.6 1011.0,743.3 1011.2,743.3 1011.3,759.4 1011.4,754.0 1011.6,735.2 1011.7,740.6 1011.8,748.6 1012.0,737.9 1012.1,743.3 1012.2,751.3 1012.4,762.0 1012.5,737.9 1012.7,748.6 1012.8,746.0 1012.9,762.0 1013.1,751.3 1013.2,743.3 1013.3,748.6 1013.5,754.0 1013.6,756.7 1013.7,746.0 1013.9,751.3 1014.0,748.6 1014.1,748.6 1014.3,754.0 1014.4,748.6 1014.5,751.3 1014.7,746.0 1014.8,759.4 1015.0,756.7 1015.1,746.0 1015.2,748.6 1015.4,746.0 1015.5,729.9 1015.6,740.6 1015.8,737.9 1015.9,743.3 1016.0,748.6 1016.2,754.0 1016.3,764.7 1016.4,759.4 1016.6,767.4 1016.7,756.7 1016.9,762.0 1017.0,756.7 1017.1,746.0 1017.3,751.3 1017.4,737.9 1017.5,737.9 1017.7,737.9 1017.8,737.9 1017.9,743.3 1018.1,751.3 1018.2,743.3 1018.3,748.6 1018.5,748.6 1018.6,743.3 1018.8,756.7 1018.9,762.0 1019.0,743.3 1019.2,729.9 1019.3,737.9 1019.4,713.8 1019.6,759.4 1019.7,754.0 1019.8,767.4 1020.0,754.0 1020.1,729.9 1020.2,732.6 1020.4,756.7 1020.5,748.6 1020.7,754.0 1020.8,759.4 1020.9,748.6 1021.1,748.6 1021.2,746.0 1021.3,746.0 1021.5,740.6 1021.6,735.2 1021.7,748.6 1021.9,748.6 1022.0,746.0 1022.1,743.3 1022.3,748.6 1022.4,756.7 1022.5,751.3 1022.7,740.6 1022.8,756.7 1023.0,740.6 1023.1,759.4 1023.2,740.6 1023.4,740.6 1023.5,748.6 1023.6,746.0 1023.8,748.6 1023.9,732.6 1024.0,751.3 1024.2,754.0 1024.3,743.3 1024.4,737.9 1024.6,743.3 1024.7,748.6 1024.9,737.9 1025.0,754.0 1025.1,754.0 1025.3,759.4 1025.4,735.2 1025.5,767.4 1025.7,759.4 1025.8,746.0 1025.9,743.3 1026.1,732.6 1026.2,743.3 1026.3,751.3 1026.5,735.2 1026.6,737.9 1026.8,737.9 1026.9,737.9 1027.0,743.3 1027.2,759.4 1027.3,756.7 1027.4,729.9 1027.6,746.0 1027.7,764.7 1027.8,746.0 1028.0,737.9 1028.1,743.3 1028.2,746.0 1028.4,767.4 1028.5,746.0 1028.7,748.6 1028.8,732.6 1028.9,746.0 1029.1,748.6 1029.2,751.3 1029.3,748.6 1029.5,746.0 1029.6,751.3 1029.7,754.0 1029.9,759.4 1030.0,746.0 1030.1,751.3 1030.3,748.6 1030.4,762.0 1030.5,754.0 1030.7,764.7 1030.8,737.9 1031.0,735.2 1031.1,743.3 1031.2,748.6 1031.4,743.3 1031.5,759.4 1031.6,759.4 1031.8,735.2 1031.9,756.7 1032.0,748.6 1032.2,754.0 1032.3,770.1 1032.4,754.0 1032.6,740.6 1032.7,735.2 1032.9,770.1 1033.0,762.0 1033.1,751.3 1033.3,737.9 1033.4,735.2 1033.5,732.6 1033.7,732.6 1033.8,751.3 1033.9,756.7 1034.1,737.9 1034.2,748.6 1034.3,746.0 1034.5,751.3 1034.6,751.3 1034.8,737.9 1034.9,756.7 1035.0,762.0 1035.2,754.0 1035.3,746.0 1035.4,751.3 1035.6,748.6 1035.7,764.7 1035.8,754.0 1036.0,737.9 1036.1,748.6 1036.2,754.0 1036.4,737.9 1036.5,751.3 1036.7,740.6 1036.8,746.0 1036.9,743.3 1037.1,737.9 1037.2,727.2 1037.3,735.2 1037.5,754.0 1037.6,756.7 1037.7,751.3 1037.9,748.6 1038.0,740.6 1038.1,746.0 1038.3,746.0 1038.4,762.0 1038.6,748.6 1038.7,743.3 1038.8,732.6 1039.0,740.6 1039.1,746.0 1039.2,759.4 1039.4,748.6 1039.5,748.6 1039.6,748.6 1039.8,746.0 1039.9,743.3 1040.0,743.3 1040.2,727.2 1040.3,756.7 1040.4,762.0 1040.6,743.3 1040.7,759.4 1040.9,748.6 1041.0,748.6 1041.1,754.0 1041.3,740.6 1041.4,740.6 1041.5,746.0 1041.7,743.3 1041.8,740.6 1041.9,751.3 1042.1,743.3 1042.2,746.0 1042.3,748.6 1042.5,751.3 1042.6,732.6 1042.8,746.0 1042.9,759.4 1043.0,743.3 1043.2,770.1 1043.3,746.0 1043.4,740.6 1043.6,735.2 1043.7,746.0 1043.8,754.0 1044.0,729.9 1044.1,737.9 1044.2,735.2 1044.4,751.3 1044.5,743.3 1044.7,764.7 1044.8,743.3 1044.9,767.4 1045.1,756.7 1045.2,762.0 1045.3,737.9 1045.5,740.6 1045.6,754.0 1045.7,735.2 1045.9,746.0 1046.0,764.7 1046.1,751.3 1046.3,764.7 1046.4,746.0 1046.6,743.3 1046.7,754.0 1046.8,740.6 1047.0,737.9 1047.1,756.7 1047.2,743.3 1047.4,748.6 1047.5,751.3 1047.6,732.6 1047.8,754.0 1047.9,751.3 1048.0,748.6 1048.2,743.3 1048.3,740.6 1048.4,756.7 1048.6,735.2 1048.7,729.9 1048.9,729.9 1049.0,746.0 1049.1,751.3 1049.3,756.7 1049.4,743.3 1049.5,748.6 1049.7,748.6 1049.8,754.0 1049.9,767.4 1050.1,751.3 1050.2,748.6 1050.3,751.3 1050.5,759.4 1050.6,751.3 1050.8,748.6 1050.9,756.7 1051.0,740.6 1051.2,748.6 1051.3,746.0 1051.4,743.3 1051.6,748.6 1051.7,748.6 1051.8,743.3 1052.0,740.6 1052.1,740.6 1052.2,748.6 1052.4,740.6 1052.5,737.9 1052.7,759.4 1052.8,751.3 1052.9,748.6 1053.1,748.6 1053.2,732.6 1053.3,737.9 1053.5,748.6 1053.6,748.6 1053.7,759.4 1053.9,756.7 1054.0,735.2 1054.1,762.0 1054.3,740.6 1054.4,754.0 1054.6,751.3 1054.7,748.6 1054.8,729.9 1055.0,743.3 1055.1,743.3 1055.2,737.9 1055.4,767.4 1055.5,729.9 1055.6,762.0 1055.8,754.0 1055.9,740.6 1056.0,759.4 1056.2,762.0 1056.3,737.9 1056.4,751.3 1056.6,737.9 1056.7,743.3 1056.9,748.6 1057.0,732.6 1057.1,748.6 1057.3,729.9 1057.4,756.7 1057.5,756.7 1057.7,754.0 1057.8,746.0 1057.9,756.7 1058.1,754.0 1058.2,735.2 1058.3,746.0 1058.5,737.9 1058.6,743.3 1058.8,751.3 1058.9,754.0 1059.0,746.0 1059.2,746.0 1059.3,751.3 1059.4,751.3 1059.6,735.2 1059.7,737.9 1059.8,743.3 1060.0,751.3 1060.1,751.3 1060.2,729.9 1060.4,751.3 1060.5,727.2 1060.7,754.0 1060.8,762.0 1060.9,729.9 1061.1,748.6 1061.2,732.6 1061.3,743.3 1061.5,748.6 1061.6,737.9 1061.7,748.6 1061.9,743.3 1062.0,748.6 1062.1,762.0 1062.3,743.3 1062.4,751.3 1062.6,748.6 1062.7,743.3 1062.8,759.4 1063.0,743.3 1063.1,743.3 1063.2,729.9 1063.4,740.6 1063.5,743.3 1063.6,754.0 1063.8,748.6 1063.9,759.4 1064.0,743.3 1064.2,748.6 1064.3,751.3 1064.5,746.0 1064.6,743.3 1064.7,746.0 1064.9,759.4 1065.0,735.2 1065.1,746.0 1065.3,743.3 1065.4,748.6 1065.5,756.7 1065.7,746.0 1065.8,751.3 1065.9,754.0 1066.1,746.0 1066.2,740.6 1066.3,743.3 1066.5,746.0 1066.6,754.0 1066.8,751.3 1066.9,748.6 1067.0,759.4 1067.2,740.6 1067.3,746.0 1067.4,759.4 1067.6,735.2 1067.7,729.9 1067.8,759.4 1068.0,748.6 1068.1,754.0 1068.2,740.6 1068.4,759.4 1068.5,743.3 1068.7,743.3 1068.8,737.9 1068.9,764.7 1069.1,754.0 1069.2,748.6 1069.3,737.9 1069.5,746.0 1069.6,740.6 1069.7,743.3 1069.9,756.7 1070.0,748.6 1070.1,751.3 1070.3,751.3 1070.4,756.7 1070.6,740.6 1070.7,746.0 1070.8,764.7 1071.0,740.6 1071.1,754.0 1071.2,762.0 1071.4,737.9 1071.5,748.6 1071.6,743.3 1071.8,748.6 1071.9,748.6 1072.0,764.7 1072.2,740.6 1072.3,754.0 1072.5,748.6 1072.6,748.6 1072.7,756.7 1072.9,759.4 1073.0,748.6 1073.1,735.2 1073.3,754.0 1073.4,754.0 1073.5,746.0 1073.7,754.0 1073.8,735.2 1073.9,743.3 1074.1,724.5 1074.2,746.0 1074.3,727.2 1074.5,754.0 1074.6,746.0 1074.8,756.7 1074.9,751.3 1075.0,751.3 1075.2,743.3 1075.3,735.2 1075.4,748.6 1075.6,759.4 1075.7,748.6 1075.8,748.6 1076.0,751.3 1076.1,740.6 1076.2,737.9 1076.4,754.0 1076.5,754.0 1076.7,770.1 1076.8,754.0 1076.9,740.6 1077.1,756.7 1077.2,737.9 1077.3,740.6 1077.5,740.6 1077.6,740.6 1077.7,748.6 1077.9,737.9 1078.0,737.9 1078.1,743.3 1078.3,748.6 1078.4,735.2 1078.6,732.6 1078.7,754.0 1078.8,740.6 1079.0,746.0 1079.1,724.5 1079.2,748.6 1079.4,751.3 1079.5,754.0 1079.6,737.9 1079.8,756.7 1079.9,740.6 1080.0,751.3 1080.2,735.2 1080.3,732.6 1080.5,737.9 1080.6,764.7 1080.7,759.4 1080.9,772.8 1081.0,721.8 1081.1,751.3 1081.3,751.3 1081.4,746.0 1081.5,740.6 1081.7,751.3 1081.8,746.0 1081.9,746.0 1082.1,759.4 1082.2,729.9 1082.3,732.6 1082.5,746.0 1082.6,748.6 1082.8,729.9 1082.9,724.5 1083.0,746.0 1083.2,740.6 1083.3,751.3 1083.4,743.3 1083.6,770.1 1083.7,767.4 1083.8,743.3 1084.0,748.6 1084.1,743.3 1084.2,746.0 1084.4,740.6 1084.5,743.3 1084.7,748.6 1084.8,743.3 1084.9,754.0 1085.1,735.2 1085.2,756.7 1085.3,751.3 1085.5,737.9 1085.6,751.3 1085.7,737.9 1085.9,732.6 1086.0,740.6 1086.1,751.3 1086.3,729.9 1086.4,743.3 1086.6,756.7 1086.7,727.2 1086.8,746.0 1087.0,740.6 1087.1,737.9 1087.2,751.3 1087.4,737.9 1087.5,756.7 1087.6,756.7 1087.8,751.3 1087.9,727.2 1088.0,740.6 1088.2,735.2 1088.3,751.3 1088.5,740.6 1088.6,764.7 1088.7,748.6 1088.9,743.3 1089.0,751.3 1089.1,764.7 1089.3,762.0 1089.4,740.6 1089.5,735.2 1089.7,748.6 1089.8,732.6 1089.9,759.4 1090.1,740.6 1090.2,743.3 1090.3,737.9 1090.5,759.4 1090.6,737.9 1090.8,746.0 1090.9,754.0 1091.0,751.3 1091.2,748.6 1091.3,743.3 1091.4,754.0 1091.6,754.0 1091.7,746.0 1091.8,746.0 1092.0,743.3 1092.1,737.9 1092.2,764.7 1092.4,748.6 1092.5,746.0 1092.7,746.0 1092.8,756.7 1092.9,740.6 1093.1,732.6 1093.2,748.6 1093.3,754.0 1093.5,740.6 1093.6,746.0 1093.7,746.0 1093.9,746.0 1094.0,751.3 1094.1,748.6 1094.3,754.0 1094.4,764.7 1094.6,737.9 1094.7,746.0 1094.8,748.6 1095.0,735.2 1095.1,748.6 1095.2,737.9 1095.4,740.6 1095.5,751.3 1095.6,759.4 1095.8,743.3 1095.9,746.0 1096.0,737.9 1096.2,762.0 1096.3,748.6 1096.5,746.0 1096.6,743.3 1096.7,746.0 1096.9,743.3 1097.0,767.4 1097.1,751.3 1097.3,754.0 1097.4,762.0 1097.5,746.0 1097.7,751.3 1097.8,759.4 1097.9,759.4 1098.1,743.3 1098.2,770.1 1098.3,748.6 1098.5,756.7 1098.6,746.0 1098.8,729.9 1098.9,737.9 1099.0,748.6 1099.2,732.6 1099.3,729.9 1099.4,737.9 1099.6,729.9 1099.7,746.0 1099.8,740.6 1100.0,748.6 1100.1,751.3 1100.2,746.0 1100.4,754.0 1100.5,748.6 1100.7,727.2 1100.8,740.6 1100.9,748.6 1101.1,732.6 1101.2,735.2 1101.3,756.7 1101.5,754.0 1101.6,732.6 1101.7,746.0 1101.9,746.0 1102.0,751.3 1102.1,756.7 1102.3,737.9 1102.4,754.0 1102.6,743.3 1102.7,729.9 1102.8,743.3 1103.0,748.6 1103.1,740.6 1103.2,743.3 1103.4,751.3 1103.5,746.0 1103.6,759.4 1103.8,764.7 1103.9,751.3 1104.0,764.7 1104.2,754.0 1104.3,748.6 1104.5,746.0 1104.6,729.9 1104.7,756.7 1104.9,751.3 1105.0,751.3 1105.1,756.7 1105.3,729.9 1105.4,754.0 1105.5,748.6 1105.7,748.6 1105.8,724.5 1105.9,751.3 1106.1,754.0 1106.2,735.2 1106.4,754.0 1106.5,767.4 1106.6,737.9 1106.8,737.9 1106.9,762.0 1107.0,759.4 1107.2,748.6 1107.3,756.7 1107.4,762.0 1107.6,759.4 1107.7,729.9 1107.8,737.9 1108.0,756.7 1108.1,748.6 1108.2,746.0 1108.4,751.3 1108.5,748.6 1108.7,732.6 1108.8,754.0 1108.9,754.0 1109.1,748.6 1109.2,754.0 1109.3,751.3 1109.5,751.3 1109.6,756.7 1109.7,737.9 1109.9,754.0 1110.0,735.2 1110.1,756.7 1110.3,756.7 1110.4,746.0 1110.6,751.3 1110.7,740.6 1110.8,740.6 1111.0,727.2 1111.1,775.4 1111.2,756.7 1111.4,748.6 1111.5,751.3 1111.6,748.6 1111.8,724.5 1111.9,770.1 1112.0,740.6 1112.2,751.3 1112.3,748.6 1112.5,737.9 1112.6,748.6 1112.7,740.6 1112.9,735.2 1113.0,737.9 1113.1,764.7 1113.3,754.0 1113.4,759.4 1113.5,756.7 1113.7,751.3 1113.8,729.9 1113.9,754.0 1114.1,751.3 1114.2,748.6 1114.4,735.2 1114.5,754.0 1114.6,743.3 1114.8,740.6 1114.9,743.3 1115.0,767.4 1115.2,759.4 1115.3,743.3 1115.4,764.7 1115.6,751.3 1115.7,762.0 1115.8,746.0 1116.0,748.6 1116.1,762.0 1116.2,751.3 1116.4,759.4 1116.5,754.0 1116.7,737.9 1116.8,746.0 1116.9,746.0 1117.1,735.2 1117.2,748.6 1117.3,735.2 1117.5,746.0 1117.6,746.0 1117.7,751.3 1117.9,756.7 1118.0,759.4 1118.1,756.7 1118.3,743.3 1118.4,746.0 1118.6,756.7 1118.7,737.9 1118.8,754.0 1119.0,751.3 1119.1,762.0 1119.2,756.7 1119.4,740.6 1119.5,746.0 1119.6,754.0 1119.8,737.9 1119.9,748.6 1120.0,748.6 1120.2,737.9 1120.3,743.3 1120.5,751.3 1120.6,759.4 1120.7,737.9 1120.9,770.1 1121.0,754.0 1121.1,764.7 1121.3,754.0 1121.4,740.6 1121.5,751.3 1121.7,754.0 1121.8,748.6 1121.9,729.9 1122.1,735.2 1122.2,746.0 1122.4,754.0 1122.5,751.3 1122.6,746.0 1122.8,751.3 1122.9,748.6 1123.0,759.4 1123.2,762.0 1123.3,759.4 1123.4,746.0 1123.6,756.7 1123.7,724.5 1123.8,743.3 1124.0,743.3 1124.1,737.9 1124.2,759.4 1124.4,759.4 1124.5,751.3 1124.7,743.3 1124.8,743.3 1124.9,732.6 1125.1,735.2 1125.2,737.9 1125.3,737.9 1125.5,746.0 1125.6,740.6 1125.7,751.3 1125.9,751.3 1126.0,737.9 1126.1,762.0 1126.3,735.2 1126.4,729.9 1126.6,751.3 1126.7,740.6 1126.8,746.0 1127.0,756.7 1127.1,743.3 1127.2,743.3 1127.4,737.9 1127.5,751.3 1127.6,746.0 1127.8,751.3 1127.9,737.9 1128.0,748.6 1128.2,737.9 1128.3,754.0 1128.5,746.0 1128.6,754.0 1128.7,754.0 1128.9,737.9 1129.0,748.6 1129.1,748.6 1129.3,740.6 1129.4,754.0 1129.5,729.9 1129.7,754.0 1129.8,751.3 1129.9,727.2 1130.1,762.0 1130.2,729.9 1130.4,743.3 1130.5,743.3 1130.6,756.7 1130.8,746.0 1130.9,759.4 1131.0,737.9 1131.2,748.6 1131.3,754.0 1131.4,751.3 1131.6,748.6 1131.7,737.9 1131.8,743.3 1132.0,754.0 1132.1,754.0 1132.2,756.7 1132.4,740.6 1132.5,743.3 1132.7,756.7 1132.8,762.0 1132.9,748.6 1133.1,754.0 1133.2,743.3 1133.3,748.6 1133.5,743.3 1133.6,740.6 1133.7,737.9 1133.9,748.6 1134.0,740.6 1134.1,754.0 1134.3,759.4 1134.4,746.0 1134.6,735.2 1134.7,735.2 1134.8,748.6 1135.0,764.7 1135.1,746.0 1135.2,748.6 1135.4,743.3 1135.5,737.9 1135.6,751.3 1135.8,754.0 1135.9,751.3 1136.0,754.0 1136.2,756.7 1136.3,746.0 1136.5,754.0 1136.6,751.3 1136.7,751.3 1136.9,754.0 1137.0,743.3 1137.1,751.3 1137.3,748.6 1137.4,740.6 1137.5,748.6 1137.7,762.0 1137.8,751.3 1137.9,751.3 1138.1,743.3 1138.2,732.6 1138.4,746.0 1138.5,748.6 1138.6,735.2 1138.8,754.0 1138.9,746.0 1139.0,743.3 1139.2,748.6 1139.3,748.6 1139.4,746.0 1139.6,735.2 1139.7,743.3 1139.8,754.0 1140.0,746.0 1140.1,740.6 1140.3,732.6 1140.4,740.6 1140.5,746.0 1140.7,735.2 1140.8,740.6 1140.9,746.0 1141.1,754.0 1141.2,746.0 1141.3,740.6 1141.5,756.7 1141.6,762.0 1141.7,743.3 1141.9,762.0 1142.0,759.4 1142.1,751.3 1142.3,751.3 1142.4,748.6 1142.6,746.0 1142.7,743.3 1142.8,748.6 1143.0,756.7 1143.1,772.8 1143.2,737.9 1143.4,740.6 1143.5,743.3 1143.6,748.6 1143.8,756.7 1143.9,743.3 1144.0,748.6 1144.2,762.0 1144.3,737.9 1144.5,762.0 1144.6,751.3 1144.7,732.6 1144.9,756.7 1145.0,746.0 1145.1,737.9 1145.3,748.6 1145.4,762.0 1145.5,754.0 1145.7,748.6 1145.8,762.0 1145.9,735.2 1146.1,746.0 1146.2,743.3 1146.4,746.0 1146.5,746.0 1146.6,751.3 1146.8,762.0 1146.9,743.3 1147.0,748.6 1147.2,735.2 1147.3,759.4 1147.4,746.0 1147.6,729.9 1147.7,762.0 1147.8,759.4 1148.0,746.0 1148.1,732.6 1148.3,759.4 1148.4,748.6 1148.5,751.3 1148.7,754.0 1148.8,751.3 1148.9,737.9 1149.1,748.6 1149.2,762.0 1149.3,754.0 1149.5,748.6 1149.6,762.0 1149.7,754.0 1149.9,751.3 1150.0,767.4 1150.1,732.6 1150.3,764.7 1150.4,748.6 1150.6,751.3 1150.7,754.0 1150.8,737.9 1151.0,748.6 1151.1,756.7 1151.2,737.9 1151.4,743.3 1151.5,759.4 1151.6,762.0 1151.8,740.6 1151.9,751.3 1152.0,762.0 1152.2,743.3 1152.3,762.0 1152.5,754.0 1152.6,756.7 1152.7,767.4 1152.9,743.3 1153.0,716.5 1153.1,743.3 1153.3,746.0 1153.4,751.3 1153.5,748.6 1153.7,746.0 1153.8,743.3 1153.9,754.0 1154.1,748.6 1154.2,751.3 1154.4,743.3 1154.5,740.6 1154.6,737.9 1154.8,754.0 1154.9,754.0 1155.0,743.3 1155.2,751.3 1155.3,751.3 1155.4,743.3 1155.6,746.0 1155.7,735.2 1155.8,759.4 1156.0,737.9 1156.1,754.0 1156.3,743.3 1156.4,759.4 1156.5,748.6 1156.7,754.0 1156.8,732.6 1156.9,756.7 1157.1,737.9 1157.2,756.7 1157.3,759.4 1157.5,746.0 1157.6,737.9 1157.7,748.6 1157.9,743.3 1158.0,746.0 1158.1,748.6 1158.3,735.2 1158.4,748.6 1158.6,740.6 1158.7,759.4 1158.8,748.6 1159.0,740.6 1159.1,751.3 1159.2,767.4 1159.4,740.6 1159.5,743.3 1159.6,751.3 1159.8,746.0 1159.9,751.3 1160.0,743.3 1160.2,737.9 1160.3,746.0 1160.5,748.6 1160.6,751.3 1160.7,748.6 1160.9,751.3 1161.0,737.9 1161.1,756.7 1161.3,754.0 1161.4,746.0 1161.5,746.0 1161.7,746.0 1161.8,751.3 1161.9,746.0 1162.1,762.0 1162.2,762.0 1162.4,759.4 1162.5,743.3 1162.6,735.2 1162.8,751.3 1162.9,754.0 1163.0,751.3 1163.2,732.6 1163.3,746.0 1163.4,746.0 1163.6,754.0 1163.7,743.3 1163.8,735.2 1164.0,746.0 1164.1,754.0 1164.3,735.2 1164.4,748.6 1164.5,732.6 1164.7,756.7 1164.8,748.6 1164.9,746.0 1165.1,764.7 1165.2,746.0 1165.3,743.3 1165.5,748.6 1165.6,743.3 1165.7,746.0 1165.9,754.0 1166.0,740.6 1166.2,754.0 1166.3,751.3 1166.4,754.0 1166.6,740.6 1166.7,751.3 1166.8,751.3 1167.0,767.4 1167.1,751.3 1167.2,737.9 1167.4,767.4 1167.5,743.3 1167.6,748.6 1167.8,764.7 1167.9,751.3 1168.0,737.9 1168.2,748.6 1168.3,746.0 1168.5,737.9 1168.6,751.3 1168.7,740.6 1168.9,759.4 1169.0,756.7 1169.1,735.2 1169.3,735.2 1169.4,740.6 1169.5,762.0 1169.7,748.6 1169.8,756.7 1169.9,729.9 1170.1,759.4 1170.2,759.4 1170.4,754.0 1170.5,746.0 1170.6,754.0 1170.8,751.3 1170.9,746.0 1171.0,748.6 1171.2,764.7 1171.3,759.4 1171.4,732.6 1171.6,746.0 1171.7,729.9 1171.8,735.2 1172.0,737.9 1172.1,746.0 1172.3,732.6 1172.4,751.3 1172.5,727.2 1172.7,743.3 1172.8,743.3 1172.9,751.3 1173.1,751.3 1173.2,748.6 1173.3,751.3 1173.5,754.0 1173.6,756.7 1173.7,746.0 1173.9,735.2 1174.0,729.9 1174.2,740.6 1174.3,748.6 1174.4,740.6 1174.6,732.6 1174.7,746.0 1174.8,737.9 1175.0,743.3 1175.1,746.0 1175.2,751.3 1175.4,740.6 1175.5,754.0 1175.6,756.7 1175.8,743.3 1175.9,737.9 1176.0,737.9 1176.2,737.9 1176.3,748.6 1176.5,748.6 1176.6,737.9 1176.7,727.2 1176.9,770.1 1177.0,735.2 1177.1,746.0 1177.3,748.6 1177.4,754.0 1177.5,751.3 1177.7,756.7 1177.8,746.0 1177.9,759.4 1178.1,751.3 1178.2,762.0 1178.4,737.9 1178.5,743.3 1178.6,759.4 1178.8,746.0 1178.9,754.0 1179.0,756.7 1179.2,748.6 1179.3,743.3 1179.4,735.2 1179.6,748.6 1179.7,740.6 1179.8,743.3 1180.0,743.3 1180.1,740.6 1180.3,762.0 1180.4,754.0 1180.5,735.2 1180.7,762.0 1180.8,756.7 1180.9,732.6 1181.1,759.4 1181.2,748.6 1181.3,748.6 1181.5,754.0 1181.6,740.6 1181.7,743.3 1181.9,756.7 1182.0,735.2 1182.2,756.7 1182.3,754.0 1182.4,751.3 1182.6,748.6 1182.7,759.4 1182.8,748.6 1183.0,770.1"/>
<rect x="911.00" y="689.00" width="274.20" height="120.00" fill="none" stroke="#000" stroke-width="1.75"/>
<line x1="911.90" y1="809.00" x2="911.90" y2="815.90" stroke="#000" stroke-width="1.75"/>
<text x="911.90" y="832.00" font-size="11.00" text-anchor="middle" fill="#000">0</text>
<line x1="979.70" y1="809.00" x2="979.70" y2="815.90" stroke="#000" stroke-width="1.75"/>
<text x="970.42" y="832.00" font-size="11.00" textLength="18.56" lengthAdjust="spacingAndGlyphs" fill="#000">500</text>
<line x1="1047.50" y1="809.00" x2="1047.50" y2="815.90" stroke="#000" stroke-width="1.75"/>
<text x="1035.13" y="832.00" font-size="11.00" textLength="24.74" lengthAdjust="spacingAndGlyphs" fill="#000">1000</text>
<line x1="1115.30" y1="809.00" x2="1115.30" y2="815.90" stroke="#000" stroke-width="1.75"/>
<text x="1102.93" y="832.00" font-size="11.00" textLength="24.74" lengthAdjust="spacingAndGlyphs" fill="#000">1500</text>
<line x1="1183.10" y1="809.00" x2="1183.10" y2="815.90" stroke="#000" stroke-width="1.75"/>
<text x="1170.73" y="832.00" font-size="11.00" textLength="24.74" lengthAdjust="spacingAndGlyphs" fill="#000">2000</text>
<line x1="904.10" y1="794.20" x2="911.00" y2="794.20" stroke="#000" stroke-width="1.75"/>
<text x="879.04" y="798.10" font-size="11.00" textLength="18.56" lengthAdjust="spacingAndGlyphs" fill="#000">960</text>
<line x1="904.10" y1="767.40" x2="911.00" y2="767.40" stroke="#000" stroke-width="1.75"/>
<text x="879.04" y="771.30" font-size="11.00" textLength="18.56" lengthAdjust="spacingAndGlyphs" fill="#000">970</text>
<line x1="904.10" y1="740.60" x2="911.00" y2="740.60" stroke="#000" stroke-width="1.75"/>
<text x="879.04" y="744.50" font-size="11.00" textLength="18.56" lengthAdjust="spacingAndGlyphs" fill="#000">980</text>
<line x1="904.10" y1="713.80" x2="911.00" y2="713.80" stroke="#000" stroke-width="1.75"/>
<text x="879.04" y="717.70" font-size="11.00" textLength="18.56" lengthAdjust="spacingAndGlyphs" fill="#000">990</text>
<text x="1048.20" y="849.60" font-size="11.00" text-anchor="middle" fill="#000">Y</text>
<g transform="translate(865.90,749.00) rotate(-90)">
<text x="-17.41" y="0.00" font-size="11.00" textLength="34.82" lengthAdjust="spacingAndGlyphs" fill="#000">counts</text>
</g>
<g transform="translate(1193.80,749.00) rotate(90)">
<text x="-19.35" y="0.00" font-size="11.00" textLength="16.41" lengthAdjust="spacingAndGlyphs" fill="#000">cut</text>
<text x="0.38" y="0.00" font-size="11.00" textLength="9.50" lengthAdjust="spacingAndGlyphs" fill="#000">in</text>
<text x="16.27" y="0.00" font-size="11.00" text-anchor="middle" fill="#000">y</text>
</g>
<rect x="1108.6" y="519.7" width="73.60" height="15.80" rx="2" ry="2" fill="#fff" fill-opacity="0.8" stroke="#ccc" stroke-width="1"/>
<line x1="1111.40" y1="528.00" x2="1133.60" y2="528.00" stroke="#0000ff" stroke-width="1.75"/>
<text x="1138.20" y="531.10" font-size="11.00" textLength="38.64" lengthAdjust="spacingAndGlyphs" fill="#000">y=1000</text>
<rect x="1115.9" y="692.2" width="66.30" height="15.80" rx="2" ry="2" fill="#fff" fill-opacity="0.8" stroke="#ccc" stroke-width="1"/>
<line x1="1118.70" y1="700.00" x2="1140.90" y2="700.00" stroke="#0000ff" stroke-width="1.75"/>
<text x="1145.50" y="703.60" font-size="11.00" textLength="32.46" lengthAdjust="spacingAndGlyphs" fill="#000">x=526</text>
</svg></body></html>
